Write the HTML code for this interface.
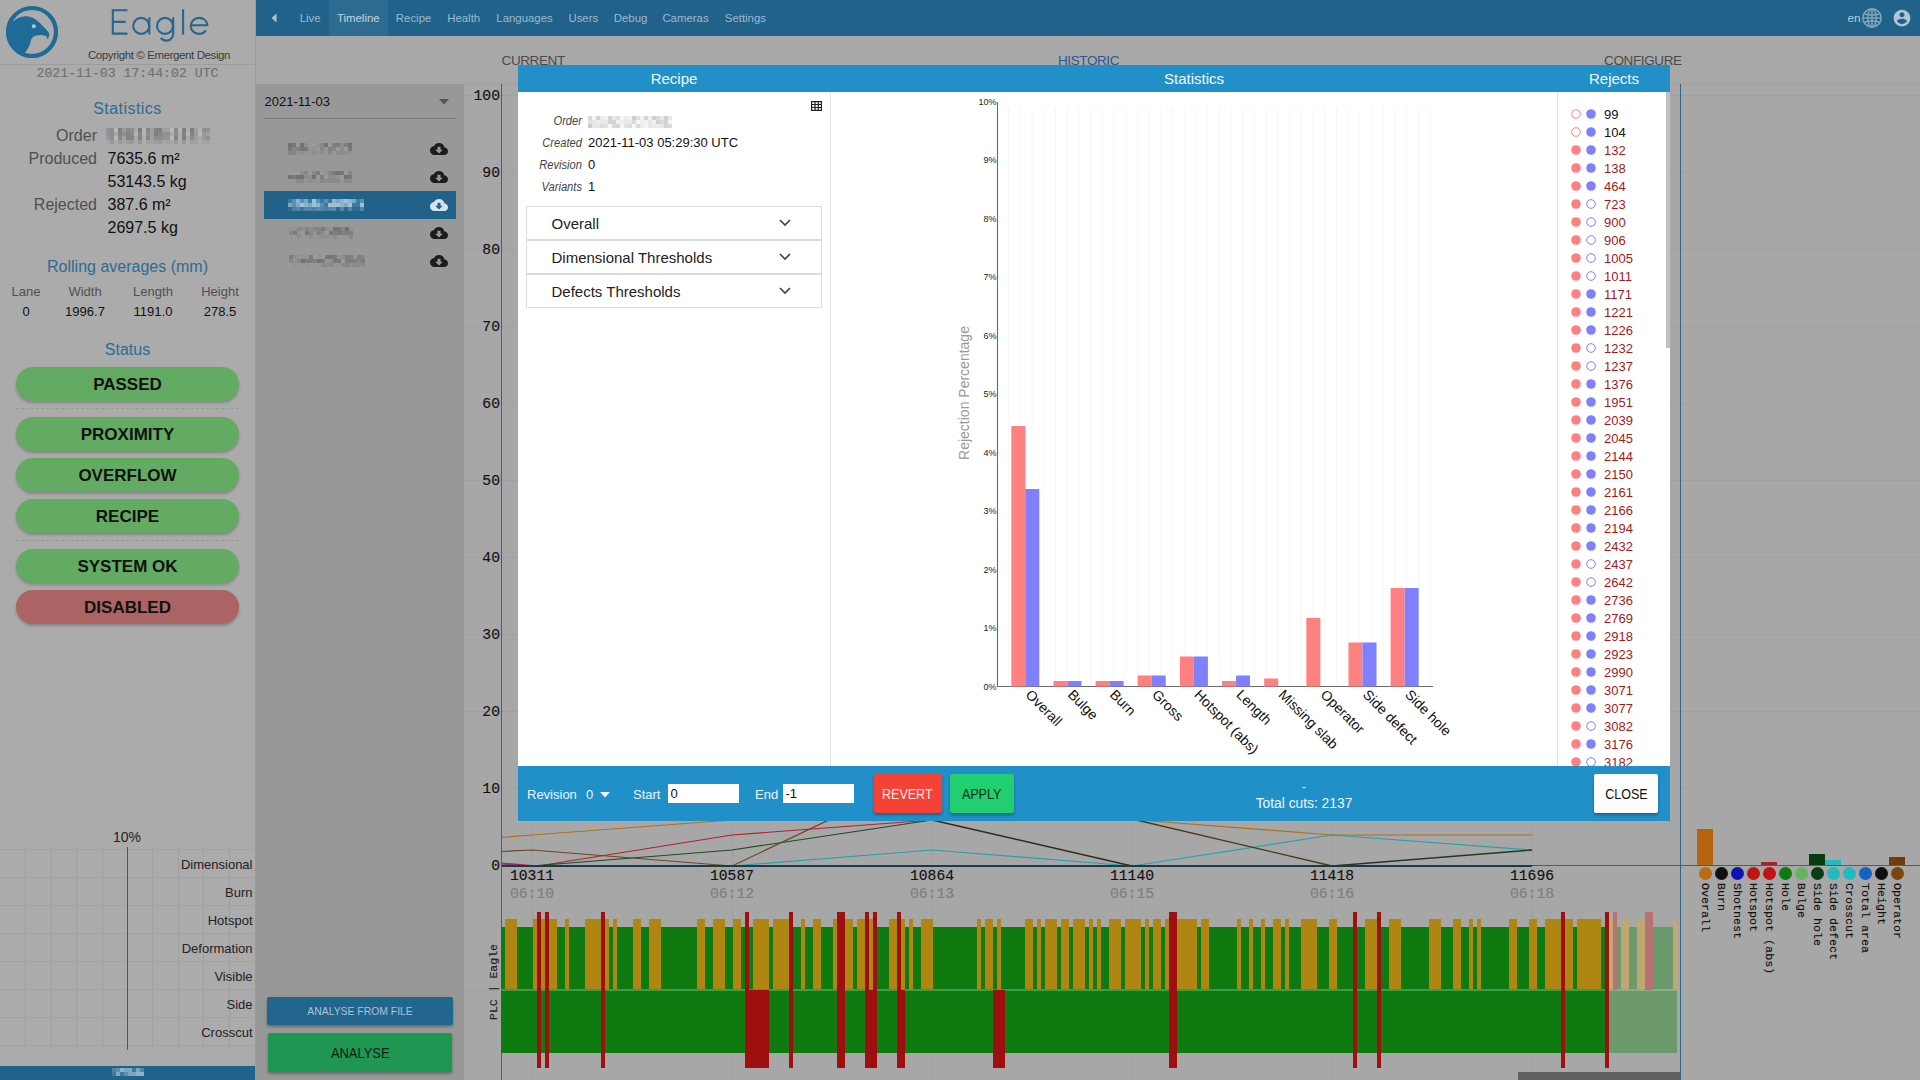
<!DOCTYPE html>
<html><head><meta charset="utf-8"><title>Eagle</title>
<style>
*{box-sizing:border-box;margin:0;padding:0}
html,body{width:1920px;height:1080px;overflow:hidden;background:#a7a7a7;font-family:"Liberation Sans",sans-serif;}
.a{position:absolute;white-space:nowrap}
.m{font-family:"Liberation Mono",monospace;-webkit-text-stroke:.15px}
.c{text-align:center}
.r{text-align:right}
#sidebar{left:0;top:0;width:255px;height:1080px;background:#ababab}
#nav{left:256px;top:0;width:1664px;height:36px;background:#21628a}
#panel{left:256px;top:84px;width:208px;height:996px;background:#989898}
.nv{top:0;height:36px;line-height:36px;font-size:11.4px;color:#9db9cc}
.pill{left:16px;width:223px;height:34px;border-radius:17px;line-height:36px;text-align:center;font-weight:bold;font-size:17px;color:#111;box-shadow:0 2px 3px rgba(0,0,0,.22)}
.g{background:#63ab63}.rd{background:#ab6363}
.st{font-size:16px;line-height:20px}
.lbl{color:#505050}
.h{color:#2d6b92;font-size:16px;line-height:20px;left:0;width:255px;text-align:center}
.t13{font-size:13px;line-height:16px}
.sq{display:inline-block;transform:scaleX(.835)}
</style></head><body>

<div class="a" style="left:256px;top:36px;width:1664px;height:48px;background:#a8a8a8"></div>
<div class="a" style="left:464px;top:83px;width:1456px;height:1px;background:#a0a0a0"></div>
<div class="a" style="left:464px;top:95px;width:1456px;height:1px;background:#a0a0a0"></div>
<div class="a" style="left:464px;top:172px;width:1456px;height:1px;background:#a0a0a0"></div>
<div class="a" style="left:464px;top:249px;width:1456px;height:1px;background:#a0a0a0"></div>
<div class="a" style="left:464px;top:326px;width:1456px;height:1px;background:#a0a0a0"></div>
<div class="a" style="left:464px;top:403px;width:1456px;height:1px;background:#a0a0a0"></div>
<div class="a" style="left:464px;top:480px;width:1456px;height:1px;background:#a0a0a0"></div>
<div class="a" style="left:464px;top:557px;width:1456px;height:1px;background:#a0a0a0"></div>
<div class="a" style="left:464px;top:634px;width:1456px;height:1px;background:#a0a0a0"></div>
<div class="a" style="left:464px;top:711px;width:1456px;height:1px;background:#a0a0a0"></div>
<div class="a" style="left:464px;top:788px;width:1456px;height:1px;background:#a0a0a0"></div>
<div class="a" style="left:532px;top:84px;width:1px;height:996px;background:#9f9f9f"></div>
<div class="a" style="left:732px;top:84px;width:1px;height:996px;background:#9f9f9f"></div>
<div class="a" style="left:932px;top:84px;width:1px;height:996px;background:#9f9f9f"></div>
<div class="a" style="left:1132px;top:84px;width:1px;height:996px;background:#9f9f9f"></div>
<div class="a" style="left:1332px;top:84px;width:1px;height:996px;background:#9f9f9f"></div>
<div class="a" style="left:1532px;top:84px;width:1px;height:996px;background:#9f9f9f"></div>
<div class="a m r" style="left:440px;width:60px;top:86px;height:20px;line-height:20px;font-size:14.7px;color:#111">100</div>
<div class="a m r" style="left:440px;width:60px;top:163px;height:20px;line-height:20px;font-size:14.7px;color:#111">90</div>
<div class="a m r" style="left:440px;width:60px;top:240px;height:20px;line-height:20px;font-size:14.7px;color:#111">80</div>
<div class="a m r" style="left:440px;width:60px;top:317px;height:20px;line-height:20px;font-size:14.7px;color:#111">70</div>
<div class="a m r" style="left:440px;width:60px;top:394px;height:20px;line-height:20px;font-size:14.7px;color:#111">60</div>
<div class="a m r" style="left:440px;width:60px;top:471px;height:20px;line-height:20px;font-size:14.7px;color:#111">50</div>
<div class="a m r" style="left:440px;width:60px;top:548px;height:20px;line-height:20px;font-size:14.7px;color:#111">40</div>
<div class="a m r" style="left:440px;width:60px;top:625px;height:20px;line-height:20px;font-size:14.7px;color:#111">30</div>
<div class="a m r" style="left:440px;width:60px;top:702px;height:20px;line-height:20px;font-size:14.7px;color:#111">20</div>
<div class="a m r" style="left:440px;width:60px;top:779px;height:20px;line-height:20px;font-size:14.7px;color:#111">10</div>
<div class="a m r" style="left:440px;width:60px;top:856px;height:20px;line-height:20px;font-size:14.7px;color:#111">0</div>
<div class="a c" style="left:483.2px;width:100px;top:50.5px;height:20px;line-height:20px;font-size:13.5px;letter-spacing:-.38px;color:#4a4a4a">CURRENT</div>
<div class="a c" style="left:1038.5px;width:100px;top:50.5px;height:20px;line-height:20px;font-size:13.5px;letter-spacing:-.38px;color:#2f5590">HISTORIC</div>
<div class="a c" style="left:1592.9px;width:100px;top:50.5px;height:20px;line-height:20px;font-size:13.5px;letter-spacing:-.38px;color:#4a4a4a">CONFIGURE</div>
<svg class="a" style="left:0;top:0" width="1920" height="1080" viewBox="0 0 1920 1080">
<polyline fill="none" stroke="#b07020" stroke-width="1.2" points="501,837.5 532,835 732,820 932,790 1132,819.5 1332,835 1532,835"/>
<polyline fill="none" stroke="#b02030" stroke-width="1.2" points="501,863 538,866 732,835 932,820 1132,760"/>
<polyline fill="none" stroke="#803070" stroke-width="1.2" points="501,864 532,866"/>
<polyline fill="none" stroke="#1f4a22" stroke-width="1.2" points="532,866 732,850 932,820"/>
<polyline fill="none" stroke="#6b4a20" stroke-width="1.2" points="501,851.5 532,850 732,866 932,771"/>
<polyline fill="none" stroke="#2aa0a8" stroke-width="1.2" points="732,866 932,850 1132,866 1332,835 1532,850"/>
<polyline fill="none" stroke="#332a1c" stroke-width="1.5" points="932,820 1132,866"/>
<polyline fill="none" stroke="#4a3a1c" stroke-width="1.3" points="1132,819 1332,866"/>
<polyline fill="none" stroke="#1f3a22" stroke-width="1.4" points="1332,866 1532,850"/>
</svg>
<div class="a" style="left:501px;top:865px;width:1031px;height:2px;background:#1d3a4a"></div>
<div class="a" style="left:1532px;top:865px;width:388px;height:1px;background:#2f6589"></div>
<div class="a" style="left:501px;top:84px;width:1px;height:996px;background:#2f6589"></div>
<div class="a" style="left:1680px;top:84px;width:1px;height:996px;background:#2f6589"></div>
<div class="a m c" style="left:492px;width:80px;top:866px;height:20px;line-height:20px;font-size:14.7px;color:#111">10311</div>
<div class="a m c" style="left:492px;width:80px;top:884px;height:20px;line-height:20px;font-size:14.7px;color:#7d7d7d">06:10</div>
<div class="a m c" style="left:692px;width:80px;top:866px;height:20px;line-height:20px;font-size:14.7px;color:#111">10587</div>
<div class="a m c" style="left:692px;width:80px;top:884px;height:20px;line-height:20px;font-size:14.7px;color:#7d7d7d">06:12</div>
<div class="a m c" style="left:892px;width:80px;top:866px;height:20px;line-height:20px;font-size:14.7px;color:#111">10864</div>
<div class="a m c" style="left:892px;width:80px;top:884px;height:20px;line-height:20px;font-size:14.7px;color:#7d7d7d">06:13</div>
<div class="a m c" style="left:1092px;width:80px;top:866px;height:20px;line-height:20px;font-size:14.7px;color:#111">11140</div>
<div class="a m c" style="left:1092px;width:80px;top:884px;height:20px;line-height:20px;font-size:14.7px;color:#7d7d7d">06:15</div>
<div class="a m c" style="left:1292px;width:80px;top:866px;height:20px;line-height:20px;font-size:14.7px;color:#111">11418</div>
<div class="a m c" style="left:1292px;width:80px;top:884px;height:20px;line-height:20px;font-size:14.7px;color:#7d7d7d">06:16</div>
<div class="a m c" style="left:1492px;width:80px;top:866px;height:20px;line-height:20px;font-size:14.7px;color:#111">11696</div>
<div class="a m c" style="left:1492px;width:80px;top:884px;height:20px;line-height:20px;font-size:14.7px;color:#7d7d7d">06:18</div>
<div class="a" style="left:501px;top:927px;width:1108px;height:125.5px;background:#0f7a0f"></div>
<div class="a" style="left:1613px;top:927px;width:64px;height:63px;background:#6d9a6d"></div>
<div class="a" style="left:1609px;top:990px;width:68px;height:62.5px;background:#6d9a6d"></div>
<div class="a" style="left:505px;top:919px;width:12px;height:71px;background:#b08612"></div>
<div class="a" style="left:533px;top:919px;width:24px;height:71px;background:#b08612"></div>
<div class="a" style="left:565px;top:919px;width:4px;height:71px;background:#b08612"></div>
<div class="a" style="left:585px;top:919px;width:24px;height:71px;background:#b08612"></div>
<div class="a" style="left:613px;top:919px;width:4px;height:71px;background:#b08612"></div>
<div class="a" style="left:633px;top:919px;width:8px;height:71px;background:#b08612"></div>
<div class="a" style="left:649px;top:919px;width:12px;height:71px;background:#b08612"></div>
<div class="a" style="left:697px;top:919px;width:8px;height:71px;background:#b08612"></div>
<div class="a" style="left:713px;top:919px;width:12px;height:71px;background:#b08612"></div>
<div class="a" style="left:733px;top:919px;width:8px;height:71px;background:#b08612"></div>
<div class="a" style="left:753px;top:919px;width:16px;height:71px;background:#b08612"></div>
<div class="a" style="left:773px;top:919px;width:16px;height:71px;background:#b08612"></div>
<div class="a" style="left:801px;top:919px;width:4px;height:71px;background:#b08612"></div>
<div class="a" style="left:813px;top:919px;width:8px;height:71px;background:#b08612"></div>
<div class="a" style="left:833px;top:919px;width:20px;height:71px;background:#b08612"></div>
<div class="a" style="left:857px;top:919px;width:16px;height:71px;background:#b08612"></div>
<div class="a" style="left:889px;top:919px;width:16px;height:71px;background:#b08612"></div>
<div class="a" style="left:909px;top:919px;width:4px;height:71px;background:#b08612"></div>
<div class="a" style="left:921px;top:919px;width:12px;height:71px;background:#b08612"></div>
<div class="a" style="left:977px;top:919px;width:4px;height:71px;background:#b08612"></div>
<div class="a" style="left:985px;top:919px;width:8px;height:71px;background:#b08612"></div>
<div class="a" style="left:997px;top:919px;width:4px;height:71px;background:#b08612"></div>
<div class="a" style="left:1025px;top:919px;width:8px;height:71px;background:#b08612"></div>
<div class="a" style="left:1037px;top:919px;width:4px;height:71px;background:#b08612"></div>
<div class="a" style="left:1045px;top:919px;width:12px;height:71px;background:#b08612"></div>
<div class="a" style="left:1061px;top:919px;width:8px;height:71px;background:#b08612"></div>
<div class="a" style="left:1073px;top:919px;width:12px;height:71px;background:#b08612"></div>
<div class="a" style="left:1089px;top:919px;width:4px;height:71px;background:#b08612"></div>
<div class="a" style="left:1097px;top:919px;width:4px;height:71px;background:#b08612"></div>
<div class="a" style="left:1109px;top:919px;width:12px;height:71px;background:#b08612"></div>
<div class="a" style="left:1125px;top:919px;width:16px;height:71px;background:#b08612"></div>
<div class="a" style="left:1145px;top:919px;width:4px;height:71px;background:#b08612"></div>
<div class="a" style="left:1153px;top:919px;width:8px;height:71px;background:#b08612"></div>
<div class="a" style="left:1165px;top:919px;width:32px;height:71px;background:#b08612"></div>
<div class="a" style="left:1201px;top:919px;width:8px;height:71px;background:#b08612"></div>
<div class="a" style="left:1237px;top:919px;width:4px;height:71px;background:#b08612"></div>
<div class="a" style="left:1249px;top:919px;width:4px;height:71px;background:#b08612"></div>
<div class="a" style="left:1261px;top:919px;width:4px;height:71px;background:#b08612"></div>
<div class="a" style="left:1273px;top:919px;width:8px;height:71px;background:#b08612"></div>
<div class="a" style="left:1285px;top:919px;width:4px;height:71px;background:#b08612"></div>
<div class="a" style="left:1301px;top:919px;width:16px;height:71px;background:#b08612"></div>
<div class="a" style="left:1329px;top:919px;width:8px;height:71px;background:#b08612"></div>
<div class="a" style="left:1365px;top:919px;width:12px;height:71px;background:#b08612"></div>
<div class="a" style="left:1389px;top:919px;width:12px;height:71px;background:#b08612"></div>
<div class="a" style="left:1429px;top:919px;width:12px;height:71px;background:#b08612"></div>
<div class="a" style="left:1453px;top:919px;width:8px;height:71px;background:#b08612"></div>
<div class="a" style="left:1469px;top:919px;width:4px;height:71px;background:#b08612"></div>
<div class="a" style="left:1477px;top:919px;width:4px;height:71px;background:#b08612"></div>
<div class="a" style="left:1509px;top:919px;width:8px;height:71px;background:#b08612"></div>
<div class="a" style="left:1529px;top:919px;width:8px;height:71px;background:#b08612"></div>
<div class="a" style="left:1545px;top:919px;width:28px;height:71px;background:#b08612"></div>
<div class="a" style="left:1577px;top:919px;width:24px;height:71px;background:#b08612"></div>
<div class="a" style="left:1609px;top:919px;width:4px;height:71px;background:#bfa872"></div>
<div class="a" style="left:1621px;top:919px;width:8px;height:71px;background:#bfa872"></div>
<div class="a" style="left:1637px;top:919px;width:8px;height:71px;background:#bfa872"></div>
<div class="a" style="left:1673px;top:919px;width:4px;height:71px;background:#bfa872"></div>
<div class="a" style="left:501px;top:989px;width:1108px;height:2px;background:#3f9a4a"></div>
<div class="a" style="left:1609px;top:989px;width:68px;height:2px;background:#8ab08a"></div>
<div class="a" style="left:537px;top:911.5px;width:4px;height:156.8px;background:#9e1010"></div>
<div class="a" style="left:545px;top:911.5px;width:4px;height:156.8px;background:#9e1010"></div>
<div class="a" style="left:601px;top:911.5px;width:4px;height:156.8px;background:#9e1010"></div>
<div class="a" style="left:789px;top:911.5px;width:4px;height:156.8px;background:#9e1010"></div>
<div class="a" style="left:837px;top:911.5px;width:8px;height:156.8px;background:#9e1010"></div>
<div class="a" style="left:1169px;top:911.5px;width:8px;height:156.8px;background:#9e1010"></div>
<div class="a" style="left:1353px;top:911.5px;width:4px;height:156.8px;background:#9e1010"></div>
<div class="a" style="left:1377px;top:911.5px;width:4px;height:156.8px;background:#9e1010"></div>
<div class="a" style="left:1561px;top:911.5px;width:4px;height:156.8px;background:#9e1010"></div>
<div class="a" style="left:1605px;top:911.5px;width:4px;height:156.8px;background:#9e1010"></div>
<div class="a" style="left:745px;top:911.5px;width:4px;height:78.5px;background:#9e1010"></div>
<div class="a" style="left:865px;top:911.5px;width:4px;height:78.5px;background:#9e1010"></div>
<div class="a" style="left:873px;top:911.5px;width:4px;height:78.5px;background:#9e1010"></div>
<div class="a" style="left:897px;top:911.5px;width:4px;height:78.5px;background:#9e1010"></div>
<div class="a" style="left:745px;top:990px;width:24px;height:78.3px;background:#9e1010"></div>
<div class="a" style="left:865px;top:990px;width:12px;height:78.3px;background:#9e1010"></div>
<div class="a" style="left:897px;top:990px;width:8px;height:78.3px;background:#9e1010"></div>
<div class="a" style="left:993px;top:990px;width:12px;height:78.3px;background:#9e1010"></div>
<div class="a" style="left:1613px;top:911.5px;width:4px;height:78.5px;background:#b87272"></div>
<div class="a" style="left:1645px;top:911.5px;width:8px;height:78.5px;background:#b87272"></div>
<div class="a" style="left:464px;top:990px;width:37px;height:1px;background:#a0a0a0"></div>
<div class="a m" style="left:494px;top:982px;width:0;height:0"><div class="a m" style="transform:translate(-50%,-50%) rotate(-90deg);font-size:11.5px;color:#222;line-height:12px">PLC | Eagle</div></div>
<div class="a" style="left:1518px;top:1072px;width:162px;height:8px;background:#616161"></div>
<div class="a" style="left:1697px;top:829px;width:16px;height:36px;background:#b5650f"></div>
<div class="a" style="left:1698.5px;top:867px;width:13px;height:13px;border-radius:50%;background:#b96c10"></div>
<div class="a m" style="left:1705px;top:883px;width:0;height:0"><div class="a m" style="transform-origin:0 0;transform:rotate(90deg) translate(0,-50%);font-size:11.7px;line-height:12px;color:#111">Overall</div></div>
<div class="a" style="left:1714.5px;top:867px;width:13px;height:13px;border-radius:50%;background:#111"></div>
<div class="a m" style="left:1721px;top:883px;width:0;height:0"><div class="a m" style="transform-origin:0 0;transform:rotate(90deg) translate(0,-50%);font-size:11.7px;line-height:12px;color:#111">Burn</div></div>
<div class="a" style="left:1730.5px;top:867px;width:13px;height:13px;border-radius:50%;background:#1212b4"></div>
<div class="a m" style="left:1737px;top:883px;width:0;height:0"><div class="a m" style="transform-origin:0 0;transform:rotate(90deg) translate(0,-50%);font-size:11.7px;line-height:12px;color:#111">Shotnest</div></div>
<div class="a" style="left:1746.5px;top:867px;width:13px;height:13px;border-radius:50%;background:#c11414"></div>
<div class="a m" style="left:1753px;top:883px;width:0;height:0"><div class="a m" style="transform-origin:0 0;transform:rotate(90deg) translate(0,-50%);font-size:11.7px;line-height:12px;color:#111">Hotspot</div></div>
<div class="a" style="left:1761px;top:862px;width:16px;height:3px;background:#a82028"></div>
<div class="a" style="left:1762.5px;top:867px;width:13px;height:13px;border-radius:50%;background:#c11414"></div>
<div class="a m" style="left:1769px;top:883px;width:0;height:0"><div class="a m" style="transform-origin:0 0;transform:rotate(90deg) translate(0,-50%);font-size:11.7px;line-height:12px;color:#111">Hotspot (abs)</div></div>
<div class="a" style="left:1778.5px;top:867px;width:13px;height:13px;border-radius:50%;background:#0f7a0f"></div>
<div class="a m" style="left:1785px;top:883px;width:0;height:0"><div class="a m" style="transform-origin:0 0;transform:rotate(90deg) translate(0,-50%);font-size:11.7px;line-height:12px;color:#111">Hole</div></div>
<div class="a" style="left:1794.5px;top:867px;width:13px;height:13px;border-radius:50%;background:#63b463"></div>
<div class="a m" style="left:1801px;top:883px;width:0;height:0"><div class="a m" style="transform-origin:0 0;transform:rotate(90deg) translate(0,-50%);font-size:11.7px;line-height:12px;color:#111">Bulge</div></div>
<div class="a" style="left:1809px;top:854px;width:16px;height:11px;background:#0a3a10"></div>
<div class="a" style="left:1810.5px;top:867px;width:13px;height:13px;border-radius:50%;background:#0c3c12"></div>
<div class="a m" style="left:1817px;top:883px;width:0;height:0"><div class="a m" style="transform-origin:0 0;transform:rotate(90deg) translate(0,-50%);font-size:11.7px;line-height:12px;color:#111">Side hole</div></div>
<div class="a" style="left:1825px;top:860px;width:16px;height:5px;background:#22b9c1"></div>
<div class="a" style="left:1826.5px;top:867px;width:13px;height:13px;border-radius:50%;background:#22b9c1"></div>
<div class="a m" style="left:1833px;top:883px;width:0;height:0"><div class="a m" style="transform-origin:0 0;transform:rotate(90deg) translate(0,-50%);font-size:11.7px;line-height:12px;color:#111">Side defect</div></div>
<div class="a" style="left:1842.5px;top:867px;width:13px;height:13px;border-radius:50%;background:#22b9c1"></div>
<div class="a m" style="left:1849px;top:883px;width:0;height:0"><div class="a m" style="transform-origin:0 0;transform:rotate(90deg) translate(0,-50%);font-size:11.7px;line-height:12px;color:#111">Crosscut</div></div>
<div class="a" style="left:1858.5px;top:867px;width:13px;height:13px;border-radius:50%;background:#1264c4"></div>
<div class="a m" style="left:1865px;top:883px;width:0;height:0"><div class="a m" style="transform-origin:0 0;transform:rotate(90deg) translate(0,-50%);font-size:11.7px;line-height:12px;color:#111">Total area</div></div>
<div class="a" style="left:1874.5px;top:867px;width:13px;height:13px;border-radius:50%;background:#111"></div>
<div class="a m" style="left:1881px;top:883px;width:0;height:0"><div class="a m" style="transform-origin:0 0;transform:rotate(90deg) translate(0,-50%);font-size:11.7px;line-height:12px;color:#111">Height</div></div>
<div class="a" style="left:1889px;top:857px;width:16px;height:8px;background:#6b3d10"></div>
<div class="a" style="left:1890.5px;top:867px;width:13px;height:13px;border-radius:50%;background:#7a4512"></div>
<div class="a m" style="left:1897px;top:883px;width:0;height:0"><div class="a m" style="transform-origin:0 0;transform:rotate(90deg) translate(0,-50%);font-size:11.7px;line-height:12px;color:#111">Operator</div></div>
<div id="nav" class="a">
<div class="a" style="left:73px;top:0;width:59px;height:36px;background:#2d6b91"></div>
<svg class="a" style="left:14px;top:13px" width="8" height="10" viewBox="0 0 8 10"><path d="M6.5 0.5 L1.5 5 L6.5 9.5Z" fill="#a9c3d4"/></svg>
<div class="a nv c" style="left:4.1px;width:100px;color:#9db9cc">Live</div>
<div class="a nv c" style="left:52.3px;width:100px;color:#c3d6e2">Timeline</div>
<div class="a nv c" style="left:107.6px;width:100px;color:#9db9cc">Recipe</div>
<div class="a nv c" style="left:157.7px;width:100px;color:#9db9cc">Health</div>
<div class="a nv c" style="left:218.5px;width:100px;color:#9db9cc">Languages</div>
<div class="a nv c" style="left:277.3px;width:100px;color:#9db9cc">Users</div>
<div class="a nv c" style="left:324.6px;width:100px;color:#9db9cc">Debug</div>
<div class="a nv c" style="left:379.5px;width:100px;color:#9db9cc">Cameras</div>
<div class="a nv c" style="left:439.4px;width:100px;color:#9db9cc">Settings</div>
<div class="a nv" style="left:1591.5px;color:#b7cddb;font-size:11.8px">en</div>
<svg class="a" style="left:1606px;top:8px" width="20" height="20" viewBox="0 0 20 20" fill="none" stroke="#7fa3bb" stroke-width="1.6"><circle cx="10" cy="10" r="9.1"/><ellipse cx="10" cy="10" rx="4.2" ry="9.1"/><path d="M10 0.9V19.1M1 10H19M2.3 5.6C6 7.6 14 7.6 17.7 5.6M2.3 14.4C6 12.4 14 12.4 17.7 14.4"/></svg>
<svg class="a" style="left:1636.3px;top:8px" width="20" height="20" viewBox="0 0 24 24"><path fill="#b0c5d5" d="M12 2C6.48 2 2 6.48 2 12s4.48 10 10 10 10-4.48 10-10S17.52 2 12 2zm0 3c1.66 0 3 1.34 3 3s-1.34 3-3 3-3-1.34-3-3 1.34-3 3-3zm0 14.2c-2.5 0-4.71-1.28-6-3.22.03-1.99 4-3.08 6-3.08 1.99 0 5.97 1.09 6 3.08-1.29 1.94-3.5 3.22-6 3.22z"/></svg>
</div>
<div id="panel" class="a">
<div class="a t13" style="left:8.5px;top:9.5px;color:#111">2021-11-03</div>
<svg class="a" style="left:183px;top:14.5px" width="10" height="6" viewBox="0 0 10 6"><path d="M0 0H10L5 5.5Z" fill="#555"/></svg>
<div class="a" style="left:8px;top:34px;width:192px;height:1px;background:#7c7c7c"></div>
<div class="a" style="left:8px;top:107px;width:192px;height:28px;background:#21628a"></div>
<svg class="a" style="left:32px;top:59px" width="64" height="12" shape-rendering="crispEdges"><rect x="0" y="0" width="4" height="4" fill="#727272" opacity="1"/><rect x="4" y="0" width="4" height="4" fill="#787878" opacity="1"/><rect x="8" y="0" width="4" height="4" fill="#9a9a9a" opacity="1"/><rect x="12" y="0" width="4" height="4" fill="#727272" opacity="1"/><rect x="16" y="0" width="4" height="4" fill="#8e8e8e" opacity="1"/><rect x="20" y="0" width="4" height="4" fill="#9a9a9a" opacity="1"/><rect x="24" y="0" width="4" height="4" fill="#9a9a9a" opacity="1"/><rect x="28" y="0" width="4" height="4" fill="#949494" opacity="1"/><rect x="32" y="0" width="4" height="4" fill="#868686" opacity="1"/><rect x="36" y="0" width="4" height="4" fill="#727272" opacity="1"/><rect x="40" y="0" width="4" height="4" fill="#9a9a9a" opacity="1"/><rect x="44" y="0" width="4" height="4" fill="#808080" opacity="1"/><rect x="48" y="0" width="4" height="4" fill="#7c7c7c" opacity="1"/><rect x="52" y="0" width="4" height="4" fill="#8e8e8e" opacity="1"/><rect x="56" y="0" width="4" height="4" fill="#808080" opacity="1"/><rect x="60" y="0" width="4" height="4" fill="#727272" opacity="1"/><rect x="0" y="4" width="4" height="4" fill="#787878" opacity="1"/><rect x="4" y="4" width="4" height="4" fill="#868686" opacity="1"/><rect x="8" y="4" width="4" height="4" fill="#808080" opacity="1"/><rect x="12" y="4" width="4" height="4" fill="#787878" opacity="1"/><rect x="16" y="4" width="4" height="4" fill="#787878" opacity="1"/><rect x="20" y="4" width="4" height="4" fill="#949494" opacity="1"/><rect x="24" y="4" width="4" height="4" fill="#949494" opacity="1"/><rect x="28" y="4" width="4" height="4" fill="#9a9a9a" opacity="1"/><rect x="32" y="4" width="4" height="4" fill="#868686" opacity="1"/><rect x="36" y="4" width="4" height="4" fill="#949494" opacity="1"/><rect x="40" y="4" width="4" height="4" fill="#808080" opacity="1"/><rect x="44" y="4" width="4" height="4" fill="#868686" opacity="1"/><rect x="48" y="4" width="4" height="4" fill="#9a9a9a" opacity="1"/><rect x="52" y="4" width="4" height="4" fill="#8e8e8e" opacity="1"/><rect x="56" y="4" width="4" height="4" fill="#9a9a9a" opacity="1"/><rect x="60" y="4" width="4" height="4" fill="#787878" opacity="1"/><rect x="0" y="8" width="4" height="4" fill="#727272" opacity="0.45"/><rect x="4" y="8" width="4" height="4" fill="#727272" opacity="0.45"/><rect x="8" y="8" width="4" height="4" fill="#8e8e8e" opacity="0.45"/><rect x="12" y="8" width="4" height="4" fill="#868686" opacity="0.45"/><rect x="16" y="8" width="4" height="4" fill="#8e8e8e" opacity="0.45"/><rect x="20" y="8" width="4" height="4" fill="#949494" opacity="0.45"/><rect x="24" y="8" width="4" height="4" fill="#808080" opacity="0.45"/><rect x="28" y="8" width="4" height="4" fill="#8e8e8e" opacity="0.45"/><rect x="32" y="8" width="4" height="4" fill="#808080" opacity="0.45"/><rect x="36" y="8" width="4" height="4" fill="#9a9a9a" opacity="0.45"/><rect x="40" y="8" width="4" height="4" fill="#787878" opacity="0.45"/><rect x="44" y="8" width="4" height="4" fill="#9a9a9a" opacity="0.45"/><rect x="48" y="8" width="4" height="4" fill="#7c7c7c" opacity="0.45"/><rect x="52" y="8" width="4" height="4" fill="#808080" opacity="0.45"/><rect x="56" y="8" width="4" height="4" fill="#868686" opacity="0.45"/><rect x="60" y="8" width="4" height="4" fill="#8e8e8e" opacity="0.45"/></svg>
<svg class="a" style="left:174px;top:59px" width="18" height="12" viewBox="0 0 24 16"><path fill="#1c1c1c" d="M19.35 6.04C18.67 2.59 15.64 0 12 0 9.11 0 6.6 1.64 5.35 4.04 2.34 4.36 0 6.91 0 10c0 3.31 2.69 6 6 6h13c2.76 0 5-2.24 5-5 0-2.64-2.05-4.78-4.65-4.96zM17 9l-5 5-5-5h3V5h4v4h3z"/></svg>
<svg class="a" style="left:32px;top:87px" width="64" height="12" shape-rendering="crispEdges"><rect x="0" y="0" width="4" height="4" fill="#9a9a9a" opacity="1"/><rect x="4" y="0" width="4" height="4" fill="#9a9a9a" opacity="1"/><rect x="8" y="0" width="4" height="4" fill="#9a9a9a" opacity="1"/><rect x="12" y="0" width="4" height="4" fill="#8e8e8e" opacity="1"/><rect x="16" y="0" width="4" height="4" fill="#868686" opacity="1"/><rect x="20" y="0" width="4" height="4" fill="#9a9a9a" opacity="1"/><rect x="24" y="0" width="4" height="4" fill="#868686" opacity="1"/><rect x="28" y="0" width="4" height="4" fill="#7c7c7c" opacity="1"/><rect x="32" y="0" width="4" height="4" fill="#9a9a9a" opacity="1"/><rect x="36" y="0" width="4" height="4" fill="#949494" opacity="1"/><rect x="40" y="0" width="4" height="4" fill="#868686" opacity="1"/><rect x="44" y="0" width="4" height="4" fill="#7c7c7c" opacity="1"/><rect x="48" y="0" width="4" height="4" fill="#727272" opacity="1"/><rect x="52" y="0" width="4" height="4" fill="#787878" opacity="1"/><rect x="56" y="0" width="4" height="4" fill="#9a9a9a" opacity="1"/><rect x="60" y="0" width="4" height="4" fill="#868686" opacity="1"/><rect x="0" y="4" width="4" height="4" fill="#727272" opacity="1"/><rect x="4" y="4" width="4" height="4" fill="#7c7c7c" opacity="1"/><rect x="8" y="4" width="4" height="4" fill="#727272" opacity="1"/><rect x="12" y="4" width="4" height="4" fill="#727272" opacity="1"/><rect x="16" y="4" width="4" height="4" fill="#8e8e8e" opacity="1"/><rect x="20" y="4" width="4" height="4" fill="#8e8e8e" opacity="1"/><rect x="24" y="4" width="4" height="4" fill="#727272" opacity="1"/><rect x="28" y="4" width="4" height="4" fill="#9a9a9a" opacity="1"/><rect x="32" y="4" width="4" height="4" fill="#808080" opacity="1"/><rect x="36" y="4" width="4" height="4" fill="#9a9a9a" opacity="1"/><rect x="40" y="4" width="4" height="4" fill="#8e8e8e" opacity="1"/><rect x="44" y="4" width="4" height="4" fill="#8e8e8e" opacity="1"/><rect x="48" y="4" width="4" height="4" fill="#949494" opacity="1"/><rect x="52" y="4" width="4" height="4" fill="#9a9a9a" opacity="1"/><rect x="56" y="4" width="4" height="4" fill="#727272" opacity="1"/><rect x="60" y="4" width="4" height="4" fill="#7c7c7c" opacity="1"/><rect x="0" y="8" width="4" height="4" fill="#9a9a9a" opacity="0.45"/><rect x="4" y="8" width="4" height="4" fill="#949494" opacity="0.45"/><rect x="8" y="8" width="4" height="4" fill="#787878" opacity="0.45"/><rect x="12" y="8" width="4" height="4" fill="#7c7c7c" opacity="0.45"/><rect x="16" y="8" width="4" height="4" fill="#949494" opacity="0.45"/><rect x="20" y="8" width="4" height="4" fill="#808080" opacity="0.45"/><rect x="24" y="8" width="4" height="4" fill="#8e8e8e" opacity="0.45"/><rect x="28" y="8" width="4" height="4" fill="#949494" opacity="0.45"/><rect x="32" y="8" width="4" height="4" fill="#727272" opacity="0.45"/><rect x="36" y="8" width="4" height="4" fill="#7c7c7c" opacity="0.45"/><rect x="40" y="8" width="4" height="4" fill="#7c7c7c" opacity="0.45"/><rect x="44" y="8" width="4" height="4" fill="#787878" opacity="0.45"/><rect x="48" y="8" width="4" height="4" fill="#7c7c7c" opacity="0.45"/><rect x="52" y="8" width="4" height="4" fill="#949494" opacity="0.45"/><rect x="56" y="8" width="4" height="4" fill="#787878" opacity="0.45"/><rect x="60" y="8" width="4" height="4" fill="#7c7c7c" opacity="0.45"/></svg>
<svg class="a" style="left:174px;top:87px" width="18" height="12" viewBox="0 0 24 16"><path fill="#1c1c1c" d="M19.35 6.04C18.67 2.59 15.64 0 12 0 9.11 0 6.6 1.64 5.35 4.04 2.34 4.36 0 6.91 0 10c0 3.31 2.69 6 6 6h13c2.76 0 5-2.24 5-5 0-2.64-2.05-4.78-4.65-4.96zM17 9l-5 5-5-5h3V5h4v4h3z"/></svg>
<svg class="a" style="left:32px;top:115px" width="76" height="12" shape-rendering="crispEdges"><rect x="0" y="0" width="4" height="4" fill="#3f78a0" opacity="1"/><rect x="4" y="0" width="4" height="4" fill="#5f8fb0" opacity="1"/><rect x="8" y="0" width="4" height="4" fill="#8fb3cb" opacity="1"/><rect x="12" y="0" width="4" height="4" fill="#5f8fb0" opacity="1"/><rect x="16" y="0" width="4" height="4" fill="#7fa6c0" opacity="1"/><rect x="20" y="0" width="4" height="4" fill="#3f78a0" opacity="1"/><rect x="24" y="0" width="4" height="4" fill="#9fc0d6" opacity="1"/><rect x="28" y="0" width="4" height="4" fill="#5f8fb0" opacity="1"/><rect x="32" y="0" width="4" height="4" fill="#3f78a0" opacity="1"/><rect x="36" y="0" width="4" height="4" fill="#5f8fb0" opacity="1"/><rect x="40" y="0" width="4" height="4" fill="#3f78a0" opacity="1"/><rect x="44" y="0" width="4" height="4" fill="#8fb3cb" opacity="1"/><rect x="48" y="0" width="4" height="4" fill="#7fa6c0" opacity="1"/><rect x="52" y="0" width="4" height="4" fill="#8fb3cb" opacity="1"/><rect x="56" y="0" width="4" height="4" fill="#9fc0d6" opacity="1"/><rect x="60" y="0" width="4" height="4" fill="#8fb3cb" opacity="1"/><rect x="64" y="0" width="4" height="4" fill="#7fa6c0" opacity="1"/><rect x="68" y="0" width="4" height="4" fill="#3f78a0" opacity="1"/><rect x="72" y="0" width="4" height="4" fill="#5f8fb0" opacity="1"/><rect x="0" y="4" width="4" height="4" fill="#7fa6c0" opacity="1"/><rect x="4" y="4" width="4" height="4" fill="#5f8fb0" opacity="1"/><rect x="8" y="4" width="4" height="4" fill="#7fa6c0" opacity="1"/><rect x="12" y="4" width="4" height="4" fill="#9fc0d6" opacity="1"/><rect x="16" y="4" width="4" height="4" fill="#8fb3cb" opacity="1"/><rect x="20" y="4" width="4" height="4" fill="#7fa6c0" opacity="1"/><rect x="24" y="4" width="4" height="4" fill="#9fc0d6" opacity="1"/><rect x="28" y="4" width="4" height="4" fill="#8fb3cb" opacity="1"/><rect x="32" y="4" width="4" height="4" fill="#5f8fb0" opacity="1"/><rect x="36" y="4" width="4" height="4" fill="#3f78a0" opacity="1"/><rect x="40" y="4" width="4" height="4" fill="#9fc0d6" opacity="1"/><rect x="44" y="4" width="4" height="4" fill="#9fc0d6" opacity="1"/><rect x="48" y="4" width="4" height="4" fill="#9fc0d6" opacity="1"/><rect x="52" y="4" width="4" height="4" fill="#8fb3cb" opacity="1"/><rect x="56" y="4" width="4" height="4" fill="#7fa6c0" opacity="1"/><rect x="60" y="4" width="4" height="4" fill="#9fc0d6" opacity="1"/><rect x="64" y="4" width="4" height="4" fill="#3f78a0" opacity="1"/><rect x="68" y="4" width="4" height="4" fill="#3f78a0" opacity="1"/><rect x="72" y="4" width="4" height="4" fill="#9fc0d6" opacity="1"/><rect x="0" y="8" width="4" height="4" fill="#3f78a0" opacity="0.45"/><rect x="4" y="8" width="4" height="4" fill="#7fa6c0" opacity="0.45"/><rect x="8" y="8" width="4" height="4" fill="#8fb3cb" opacity="0.45"/><rect x="12" y="8" width="4" height="4" fill="#5f8fb0" opacity="0.45"/><rect x="16" y="8" width="4" height="4" fill="#8fb3cb" opacity="0.45"/><rect x="20" y="8" width="4" height="4" fill="#8fb3cb" opacity="0.45"/><rect x="24" y="8" width="4" height="4" fill="#7fa6c0" opacity="0.45"/><rect x="28" y="8" width="4" height="4" fill="#9fc0d6" opacity="0.45"/><rect x="32" y="8" width="4" height="4" fill="#8fb3cb" opacity="0.45"/><rect x="36" y="8" width="4" height="4" fill="#7fa6c0" opacity="0.45"/><rect x="40" y="8" width="4" height="4" fill="#8fb3cb" opacity="0.45"/><rect x="44" y="8" width="4" height="4" fill="#9fc0d6" opacity="0.45"/><rect x="48" y="8" width="4" height="4" fill="#3f78a0" opacity="0.45"/><rect x="52" y="8" width="4" height="4" fill="#8fb3cb" opacity="0.45"/><rect x="56" y="8" width="4" height="4" fill="#3f78a0" opacity="0.45"/><rect x="60" y="8" width="4" height="4" fill="#8fb3cb" opacity="0.45"/><rect x="64" y="8" width="4" height="4" fill="#3f78a0" opacity="0.45"/><rect x="68" y="8" width="4" height="4" fill="#3f78a0" opacity="0.45"/><rect x="72" y="8" width="4" height="4" fill="#8fb3cb" opacity="0.45"/></svg>
<svg class="a" style="left:174px;top:115px" width="18" height="12" viewBox="0 0 24 16"><path fill="#d8e4ec" d="M19.35 6.04C18.67 2.59 15.64 0 12 0 9.11 0 6.6 1.64 5.35 4.04 2.34 4.36 0 6.91 0 10c0 3.31 2.69 6 6 6h13c2.76 0 5-2.24 5-5 0-2.64-2.05-4.78-4.65-4.96zM17 9l-5 5-5-5h3V5h4v4h3z"/></svg>
<svg class="a" style="left:33px;top:143px" width="64" height="12" shape-rendering="crispEdges"><rect x="0" y="0" width="4" height="4" fill="#949494" opacity="1"/><rect x="4" y="0" width="4" height="4" fill="#949494" opacity="1"/><rect x="8" y="0" width="4" height="4" fill="#868686" opacity="1"/><rect x="12" y="0" width="4" height="4" fill="#8e8e8e" opacity="1"/><rect x="16" y="0" width="4" height="4" fill="#868686" opacity="1"/><rect x="20" y="0" width="4" height="4" fill="#8e8e8e" opacity="1"/><rect x="24" y="0" width="4" height="4" fill="#868686" opacity="1"/><rect x="28" y="0" width="4" height="4" fill="#868686" opacity="1"/><rect x="32" y="0" width="4" height="4" fill="#7c7c7c" opacity="1"/><rect x="36" y="0" width="4" height="4" fill="#8e8e8e" opacity="1"/><rect x="40" y="0" width="4" height="4" fill="#949494" opacity="1"/><rect x="44" y="0" width="4" height="4" fill="#727272" opacity="1"/><rect x="48" y="0" width="4" height="4" fill="#787878" opacity="1"/><rect x="52" y="0" width="4" height="4" fill="#868686" opacity="1"/><rect x="56" y="0" width="4" height="4" fill="#727272" opacity="1"/><rect x="60" y="0" width="4" height="4" fill="#949494" opacity="1"/><rect x="0" y="4" width="4" height="4" fill="#868686" opacity="1"/><rect x="4" y="4" width="4" height="4" fill="#7c7c7c" opacity="1"/><rect x="8" y="4" width="4" height="4" fill="#949494" opacity="1"/><rect x="12" y="4" width="4" height="4" fill="#9a9a9a" opacity="1"/><rect x="16" y="4" width="4" height="4" fill="#787878" opacity="1"/><rect x="20" y="4" width="4" height="4" fill="#868686" opacity="1"/><rect x="24" y="4" width="4" height="4" fill="#949494" opacity="1"/><rect x="28" y="4" width="4" height="4" fill="#808080" opacity="1"/><rect x="32" y="4" width="4" height="4" fill="#8e8e8e" opacity="1"/><rect x="36" y="4" width="4" height="4" fill="#9a9a9a" opacity="1"/><rect x="40" y="4" width="4" height="4" fill="#787878" opacity="1"/><rect x="44" y="4" width="4" height="4" fill="#808080" opacity="1"/><rect x="48" y="4" width="4" height="4" fill="#787878" opacity="1"/><rect x="52" y="4" width="4" height="4" fill="#808080" opacity="1"/><rect x="56" y="4" width="4" height="4" fill="#7c7c7c" opacity="1"/><rect x="60" y="4" width="4" height="4" fill="#808080" opacity="1"/><rect x="0" y="8" width="4" height="4" fill="#949494" opacity="0.45"/><rect x="4" y="8" width="4" height="4" fill="#9a9a9a" opacity="0.45"/><rect x="8" y="8" width="4" height="4" fill="#868686" opacity="0.45"/><rect x="12" y="8" width="4" height="4" fill="#9a9a9a" opacity="0.45"/><rect x="16" y="8" width="4" height="4" fill="#9a9a9a" opacity="0.45"/><rect x="20" y="8" width="4" height="4" fill="#868686" opacity="0.45"/><rect x="24" y="8" width="4" height="4" fill="#949494" opacity="0.45"/><rect x="28" y="8" width="4" height="4" fill="#8e8e8e" opacity="0.45"/><rect x="32" y="8" width="4" height="4" fill="#868686" opacity="0.45"/><rect x="36" y="8" width="4" height="4" fill="#808080" opacity="0.45"/><rect x="40" y="8" width="4" height="4" fill="#949494" opacity="0.45"/><rect x="44" y="8" width="4" height="4" fill="#808080" opacity="0.45"/><rect x="48" y="8" width="4" height="4" fill="#9a9a9a" opacity="0.45"/><rect x="52" y="8" width="4" height="4" fill="#949494" opacity="0.45"/><rect x="56" y="8" width="4" height="4" fill="#949494" opacity="0.45"/><rect x="60" y="8" width="4" height="4" fill="#787878" opacity="0.45"/></svg>
<svg class="a" style="left:174px;top:143px" width="18" height="12" viewBox="0 0 24 16"><path fill="#1c1c1c" d="M19.35 6.04C18.67 2.59 15.64 0 12 0 9.11 0 6.6 1.64 5.35 4.04 2.34 4.36 0 6.91 0 10c0 3.31 2.69 6 6 6h13c2.76 0 5-2.24 5-5 0-2.64-2.05-4.78-4.65-4.96zM17 9l-5 5-5-5h3V5h4v4h3z"/></svg>
<svg class="a" style="left:33px;top:171px" width="76" height="12" shape-rendering="crispEdges"><rect x="0" y="0" width="4" height="4" fill="#7c7c7c" opacity="1"/><rect x="4" y="0" width="4" height="4" fill="#8e8e8e" opacity="1"/><rect x="8" y="0" width="4" height="4" fill="#949494" opacity="1"/><rect x="12" y="0" width="4" height="4" fill="#949494" opacity="1"/><rect x="16" y="0" width="4" height="4" fill="#949494" opacity="1"/><rect x="20" y="0" width="4" height="4" fill="#7c7c7c" opacity="1"/><rect x="24" y="0" width="4" height="4" fill="#9a9a9a" opacity="1"/><rect x="28" y="0" width="4" height="4" fill="#949494" opacity="1"/><rect x="32" y="0" width="4" height="4" fill="#9a9a9a" opacity="1"/><rect x="36" y="0" width="4" height="4" fill="#787878" opacity="1"/><rect x="40" y="0" width="4" height="4" fill="#787878" opacity="1"/><rect x="44" y="0" width="4" height="4" fill="#7c7c7c" opacity="1"/><rect x="48" y="0" width="4" height="4" fill="#949494" opacity="1"/><rect x="52" y="0" width="4" height="4" fill="#8e8e8e" opacity="1"/><rect x="56" y="0" width="4" height="4" fill="#808080" opacity="1"/><rect x="60" y="0" width="4" height="4" fill="#808080" opacity="1"/><rect x="64" y="0" width="4" height="4" fill="#949494" opacity="1"/><rect x="68" y="0" width="4" height="4" fill="#808080" opacity="1"/><rect x="72" y="0" width="4" height="4" fill="#868686" opacity="1"/><rect x="0" y="4" width="4" height="4" fill="#868686" opacity="1"/><rect x="4" y="4" width="4" height="4" fill="#949494" opacity="1"/><rect x="8" y="4" width="4" height="4" fill="#868686" opacity="1"/><rect x="12" y="4" width="4" height="4" fill="#727272" opacity="1"/><rect x="16" y="4" width="4" height="4" fill="#7c7c7c" opacity="1"/><rect x="20" y="4" width="4" height="4" fill="#7c7c7c" opacity="1"/><rect x="24" y="4" width="4" height="4" fill="#808080" opacity="1"/><rect x="28" y="4" width="4" height="4" fill="#727272" opacity="1"/><rect x="32" y="4" width="4" height="4" fill="#7c7c7c" opacity="1"/><rect x="36" y="4" width="4" height="4" fill="#949494" opacity="1"/><rect x="40" y="4" width="4" height="4" fill="#8e8e8e" opacity="1"/><rect x="44" y="4" width="4" height="4" fill="#787878" opacity="1"/><rect x="48" y="4" width="4" height="4" fill="#787878" opacity="1"/><rect x="52" y="4" width="4" height="4" fill="#9a9a9a" opacity="1"/><rect x="56" y="4" width="4" height="4" fill="#7c7c7c" opacity="1"/><rect x="60" y="4" width="4" height="4" fill="#7c7c7c" opacity="1"/><rect x="64" y="4" width="4" height="4" fill="#808080" opacity="1"/><rect x="68" y="4" width="4" height="4" fill="#868686" opacity="1"/><rect x="72" y="4" width="4" height="4" fill="#7c7c7c" opacity="1"/><rect x="0" y="8" width="4" height="4" fill="#9a9a9a" opacity="0.45"/><rect x="4" y="8" width="4" height="4" fill="#8e8e8e" opacity="0.45"/><rect x="8" y="8" width="4" height="4" fill="#949494" opacity="0.45"/><rect x="12" y="8" width="4" height="4" fill="#9a9a9a" opacity="0.45"/><rect x="16" y="8" width="4" height="4" fill="#8e8e8e" opacity="0.45"/><rect x="20" y="8" width="4" height="4" fill="#9a9a9a" opacity="0.45"/><rect x="24" y="8" width="4" height="4" fill="#949494" opacity="0.45"/><rect x="28" y="8" width="4" height="4" fill="#949494" opacity="0.45"/><rect x="32" y="8" width="4" height="4" fill="#7c7c7c" opacity="0.45"/><rect x="36" y="8" width="4" height="4" fill="#7c7c7c" opacity="0.45"/><rect x="40" y="8" width="4" height="4" fill="#7c7c7c" opacity="0.45"/><rect x="44" y="8" width="4" height="4" fill="#949494" opacity="0.45"/><rect x="48" y="8" width="4" height="4" fill="#949494" opacity="0.45"/><rect x="52" y="8" width="4" height="4" fill="#7c7c7c" opacity="0.45"/><rect x="56" y="8" width="4" height="4" fill="#727272" opacity="0.45"/><rect x="60" y="8" width="4" height="4" fill="#868686" opacity="0.45"/><rect x="64" y="8" width="4" height="4" fill="#787878" opacity="0.45"/><rect x="68" y="8" width="4" height="4" fill="#7c7c7c" opacity="0.45"/><rect x="72" y="8" width="4" height="4" fill="#7c7c7c" opacity="0.45"/></svg>
<svg class="a" style="left:174px;top:171px" width="18" height="12" viewBox="0 0 24 16"><path fill="#1c1c1c" d="M19.35 6.04C18.67 2.59 15.64 0 12 0 9.11 0 6.6 1.64 5.35 4.04 2.34 4.36 0 6.91 0 10c0 3.31 2.69 6 6 6h13c2.76 0 5-2.24 5-5 0-2.64-2.05-4.78-4.65-4.96zM17 9l-5 5-5-5h3V5h4v4h3z"/></svg>
<div class="a c" style="left:11px;top:913px;width:186px;height:27.5px;line-height:30px;border-radius:2px;background:#226690;color:#a9c3d4;font-size:10.4px;box-shadow:0 2px 3px rgba(0,0,0,.3)">ANALYSE FROM FILE</div>
<div class="a c" style="left:12px;top:949px;width:184px;height:39px;line-height:40px;border-radius:2px;background:#209653;color:#0c1a10;font-size:14.2px;box-shadow:0 2px 3px rgba(0,0,0,.3)"><span class="sq" style="transform:scaleX(.91)">ANALYSE</span></div>
</div>
<div class="a" style="left:255px;top:0;width:1px;height:1080px;background:#9a9a9a"></div>
<div id="sidebar" class="a">
<svg class="a" style="left:0;top:0" width="256" height="64" viewBox="0 0 256 64">
<circle cx="32" cy="32" r="24" fill="none" stroke="#1f6a97" stroke-width="4.2"/>
<path fill="#1f6a97" d="M12.2 22.2 C15 19.5 19.5 16.6 25.5 16.2 C31 16.2 35 18.5 38.5 21.8 C42 25 45.5 28.5 49.2 33.2 C49.4 35.5 48.8 37.6 47.6 39.2 C47.3 37.6 46.6 36.4 45.4 35.8 C42.5 34.6 39 34.8 36 35.6 C33.4 36.4 31.8 37.8 31 40 C30.4 43 29.6 45.5 28.2 48 C27.2 49.8 26 51.4 24.6 53.2 C16 51 9 43 8.5 32 C8.6 28.4 10 25 12.2 22.2Z"/>
<circle cx="33.8" cy="26.2" r="2" fill="#b9c3ca"/>
<g fill="none" stroke="#26658f" stroke-width="2.1">
<path d="M127.5 10.3H112.8V33.6H127.5M112.8 21.9H125.6"/>
<circle cx="141.2" cy="25.9" r="8"/><path d="M149.3 17.3V34.5"/>
<circle cx="165" cy="25.9" r="8"/><path d="M173.2 17.3V33.5C173.2 38.5 169.5 41 166 40.6C163.6 40.4 161.8 39.4 160.6 38"/>
<path d="M183.1 9.4V34.5"/>
<path d="M190.8 25.3H207.3C207 20.5 203.2 17.9 199 17.9C194.4 17.9 190.8 21.4 190.8 25.9C190.8 30.4 194.4 33.9 199 33.9C201.8 33.9 204.2 32.6 205.8 30.3"/>
</g></svg>
<div class="a c" style="left:60px;width:198px;top:47px;height:16px;line-height:16px;font-size:11.5px;letter-spacing:-.4px;color:#3d3d3d">Copyright © Emergent Design</div>
<div class="a" style="left:0;top:64px;width:255px;height:1px;background:#9c9c9c"></div>
<div class="a m c" style="left:0;width:255px;top:66px;height:16px;line-height:16px;font-size:13.2px;color:#707070">2021-11-03 17:44:02 UTC</div>
<div class="a h" style="top:99px;letter-spacing:.45px">Statistics</div>
<div class="a st r lbl" style="left:0;width:97px;top:126px">Order</div>
<div class="a st r lbl" style="left:0;width:97px;top:149px">Produced</div>
<div class="a st" style="left:107.5px;top:149px;color:#111">7635.6 m²</div>
<div class="a st" style="left:107.5px;top:172px;color:#111">53143.5 kg</div>
<div class="a st r lbl" style="left:0;width:97px;top:195px">Rejected</div>
<div class="a st" style="left:107.5px;top:195px;color:#111">387.6 m²</div>
<div class="a st" style="left:107.5px;top:218px;color:#111">2697.5 kg</div>
<svg class="a" style="left:106px;top:128px" width="104" height="16" shape-rendering="crispEdges"><rect x="0" y="0" width="4" height="4" fill="#96969a"/><rect x="4" y="0" width="4" height="4" fill="#8d8d8d"/><rect x="8" y="0" width="4" height="4" fill="#b8b8b8"/><rect x="12" y="0" width="4" height="4" fill="#7f7f7f"/><rect x="16" y="0" width="4" height="4" fill="#9a9a9a"/><rect x="20" y="0" width="4" height="4" fill="#8a8a8e"/><rect x="24" y="0" width="4" height="4" fill="#8d8d8d"/><rect x="28" y="0" width="4" height="4" fill="#a9a9a9"/><rect x="32" y="0" width="4" height="4" fill="#7b7b7b"/><rect x="36" y="0" width="4" height="4" fill="#b6b6b6"/><rect x="40" y="0" width="4" height="4" fill="#838387"/><rect x="44" y="0" width="4" height="4" fill="#a0a0a0"/><rect x="48" y="0" width="4" height="4" fill="#828282"/><rect x="52" y="0" width="4" height="4" fill="#818181"/><rect x="56" y="0" width="4" height="4" fill="#9e9e9e"/><rect x="60" y="0" width="4" height="4" fill="#a0a0a4"/><rect x="64" y="0" width="4" height="4" fill="#b8b8b8"/><rect x="68" y="0" width="4" height="4" fill="#8a8a8a"/><rect x="72" y="0" width="4" height="4" fill="#b3b3b3"/><rect x="76" y="0" width="4" height="4" fill="#7f7f7f"/><rect x="80" y="0" width="4" height="4" fill="#aeaeb2"/><rect x="84" y="0" width="4" height="4" fill="#7f7f7f"/><rect x="88" y="0" width="4" height="4" fill="#9f9f9f"/><rect x="92" y="0" width="4" height="4" fill="#b3b3b3"/><rect x="96" y="0" width="4" height="4" fill="#8f8f8f"/><rect x="100" y="0" width="4" height="4" fill="#919195"/><rect x="0" y="4" width="4" height="4" fill="#949498"/><rect x="4" y="4" width="4" height="4" fill="#8d8d8d"/><rect x="8" y="4" width="4" height="4" fill="#a8a8a8"/><rect x="12" y="4" width="4" height="4" fill="#848484"/><rect x="16" y="4" width="4" height="4" fill="#8f8f8f"/><rect x="20" y="4" width="4" height="4" fill="#838387"/><rect x="24" y="4" width="4" height="4" fill="#8a8a8a"/><rect x="28" y="4" width="4" height="4" fill="#b3b3b3"/><rect x="32" y="4" width="4" height="4" fill="#888888"/><rect x="36" y="4" width="4" height="4" fill="#b3b3b3"/><rect x="40" y="4" width="4" height="4" fill="#8d8d91"/><rect x="44" y="4" width="4" height="4" fill="#9d9d9d"/><rect x="48" y="4" width="4" height="4" fill="#7f7f7f"/><rect x="52" y="4" width="4" height="4" fill="#868686"/><rect x="56" y="4" width="4" height="4" fill="#929292"/><rect x="60" y="4" width="4" height="4" fill="#909094"/><rect x="64" y="4" width="4" height="4" fill="#ababab"/><rect x="68" y="4" width="4" height="4" fill="#8a8a8a"/><rect x="72" y="4" width="4" height="4" fill="#adadad"/><rect x="76" y="4" width="4" height="4" fill="#838383"/><rect x="80" y="4" width="4" height="4" fill="#b4b4b8"/><rect x="84" y="4" width="4" height="4" fill="#848484"/><rect x="88" y="4" width="4" height="4" fill="#9c9c9c"/><rect x="92" y="4" width="4" height="4" fill="#b7b7b7"/><rect x="96" y="4" width="4" height="4" fill="#9b9b9b"/><rect x="100" y="4" width="4" height="4" fill="#a1a1a5"/><rect x="0" y="8" width="4" height="4" fill="#9a9a9e"/><rect x="4" y="8" width="4" height="4" fill="#8c8c8c"/><rect x="8" y="8" width="4" height="4" fill="#b9b9b9"/><rect x="12" y="8" width="4" height="4" fill="#888888"/><rect x="16" y="8" width="4" height="4" fill="#a1a1a1"/><rect x="20" y="8" width="4" height="4" fill="#828286"/><rect x="24" y="8" width="4" height="4" fill="#858585"/><rect x="28" y="8" width="4" height="4" fill="#a7a7a7"/><rect x="32" y="8" width="4" height="4" fill="#838383"/><rect x="36" y="8" width="4" height="4" fill="#acacac"/><rect x="40" y="8" width="4" height="4" fill="#858589"/><rect x="44" y="8" width="4" height="4" fill="#a0a0a0"/><rect x="48" y="8" width="4" height="4" fill="#8d8d8d"/><rect x="52" y="8" width="4" height="4" fill="#8d8d8d"/><rect x="56" y="8" width="4" height="4" fill="#929292"/><rect x="60" y="8" width="4" height="4" fill="#959599"/><rect x="64" y="8" width="4" height="4" fill="#b9b9b9"/><rect x="68" y="8" width="4" height="4" fill="#838383"/><rect x="72" y="8" width="4" height="4" fill="#b0b0b0"/><rect x="76" y="8" width="4" height="4" fill="#7e7e7e"/><rect x="80" y="8" width="4" height="4" fill="#a9a9ad"/><rect x="84" y="8" width="4" height="4" fill="#8a8a8a"/><rect x="88" y="8" width="4" height="4" fill="#9e9e9e"/><rect x="92" y="8" width="4" height="4" fill="#a9a9a9"/><rect x="96" y="8" width="4" height="4" fill="#9a9a9a"/><rect x="100" y="8" width="4" height="4" fill="#919195"/><rect x="0" y="12" width="4" height="4" fill="#a5a5a9"/><rect x="4" y="12" width="4" height="4" fill="#999999"/><rect x="8" y="12" width="4" height="4" fill="#a9a9a9"/><rect x="12" y="12" width="4" height="4" fill="#9b9b9b"/><rect x="16" y="12" width="4" height="4" fill="#a5a5a5"/><rect x="20" y="12" width="4" height="4" fill="#9d9da1"/><rect x="24" y="12" width="4" height="4" fill="#999999"/><rect x="28" y="12" width="4" height="4" fill="#a9a9a9"/><rect x="32" y="12" width="4" height="4" fill="#989898"/><rect x="36" y="12" width="4" height="4" fill="#aeaeae"/><rect x="40" y="12" width="4" height="4" fill="#9f9fa3"/><rect x="44" y="12" width="4" height="4" fill="#a3a3a3"/><rect x="48" y="12" width="4" height="4" fill="#9e9e9e"/><rect x="52" y="12" width="4" height="4" fill="#9b9b9b"/><rect x="56" y="12" width="4" height="4" fill="#a6a6a6"/><rect x="60" y="12" width="4" height="4" fill="#a2a2a6"/><rect x="64" y="12" width="4" height="4" fill="#a9a9a9"/><rect x="68" y="12" width="4" height="4" fill="#9b9b9b"/><rect x="72" y="12" width="4" height="4" fill="#a9a9a9"/><rect x="76" y="12" width="4" height="4" fill="#989898"/><rect x="80" y="12" width="4" height="4" fill="#aaaaae"/><rect x="84" y="12" width="4" height="4" fill="#9e9e9e"/><rect x="88" y="12" width="4" height="4" fill="#a0a0a0"/><rect x="92" y="12" width="4" height="4" fill="#ababab"/><rect x="96" y="12" width="4" height="4" fill="#a5a5a5"/><rect x="100" y="12" width="4" height="4" fill="#a3a3a7"/></svg>
<div class="a h" style="top:257px">Rolling averages (mm)</div>
<div class="a c t13" style="left:-14px;width:80px;top:284px;color:#505050">Lane</div>
<div class="a c t13" style="left:-14px;width:80px;top:304px;color:#111">0</div>
<div class="a c t13" style="left:45px;width:80px;top:284px;color:#505050">Width</div>
<div class="a c t13" style="left:45px;width:80px;top:304px;color:#111">1996.7</div>
<div class="a c t13" style="left:113px;width:80px;top:284px;color:#505050">Length</div>
<div class="a c t13" style="left:113px;width:80px;top:304px;color:#111">1191.0</div>
<div class="a c t13" style="left:180px;width:80px;top:284px;color:#505050">Height</div>
<div class="a c t13" style="left:180px;width:80px;top:304px;color:#111">278.5</div>
<div class="a h" style="top:340px">Status</div>
<div class="a pill g" style="top:367px">PASSED</div>
<div class="a pill g" style="top:417px">PROXIMITY</div>
<div class="a pill g" style="top:458px">OVERFLOW</div>
<div class="a pill g" style="top:499px">RECIPE</div>
<div class="a pill g" style="top:549px">SYSTEM OK</div>
<div class="a pill rd" style="top:590px">DISABLED</div>
<div class="a" style="left:16px;top:408px;width:223px;height:0;border-top:1px dashed #999"></div>
<div class="a" style="left:16px;top:540px;width:223px;height:0;border-top:1px dashed #999"></div>
<div class="a c" style="left:87px;width:80px;top:829px;height:16px;line-height:16px;font-size:14px;color:#222">10%</div>
<div class="a" style="left:25px;top:847px;width:1px;height:203px;background:#a0a0a0"></div>
<div class="a" style="left:51px;top:847px;width:1px;height:203px;background:#a0a0a0"></div>
<div class="a" style="left:76px;top:847px;width:1px;height:203px;background:#a0a0a0"></div>
<div class="a" style="left:102px;top:847px;width:1px;height:203px;background:#a0a0a0"></div>
<div class="a" style="left:152px;top:847px;width:1px;height:203px;background:#a0a0a0"></div>
<div class="a" style="left:178px;top:847px;width:1px;height:203px;background:#a0a0a0"></div>
<div class="a" style="left:203px;top:847px;width:1px;height:203px;background:#a0a0a0"></div>
<div class="a" style="left:229px;top:847px;width:1px;height:203px;background:#a0a0a0"></div>
<div class="a" style="left:0;top:849px;width:255px;height:1px;background:#a2a2a2"></div>
<div class="a" style="left:0;top:877px;width:255px;height:1px;background:#a2a2a2"></div>
<div class="a" style="left:0;top:905px;width:255px;height:1px;background:#a2a2a2"></div>
<div class="a" style="left:0;top:933px;width:255px;height:1px;background:#a2a2a2"></div>
<div class="a" style="left:0;top:961px;width:255px;height:1px;background:#a2a2a2"></div>
<div class="a" style="left:0;top:989px;width:255px;height:1px;background:#a2a2a2"></div>
<div class="a" style="left:0;top:1017px;width:255px;height:1px;background:#a2a2a2"></div>
<div class="a" style="left:0;top:1045px;width:255px;height:1px;background:#a2a2a2"></div>
<div class="a" style="left:126.5px;top:847px;width:1.3px;height:203px;background:#b03030"></div>
<div class="a r" style="left:100px;width:152.5px;top:857px;height:16px;line-height:16px;font-size:13px;color:#222">Dimensional</div>
<div class="a r" style="left:100px;width:152.5px;top:885px;height:16px;line-height:16px;font-size:13px;color:#222">Burn</div>
<div class="a r" style="left:100px;width:152.5px;top:913px;height:16px;line-height:16px;font-size:13px;color:#222">Hotspot</div>
<div class="a r" style="left:100px;width:152.5px;top:941px;height:16px;line-height:16px;font-size:13px;color:#222">Deformation</div>
<div class="a r" style="left:100px;width:152.5px;top:969px;height:16px;line-height:16px;font-size:13px;color:#222">Visible</div>
<div class="a r" style="left:100px;width:152.5px;top:997px;height:16px;line-height:16px;font-size:13px;color:#222">Side</div>
<div class="a r" style="left:100px;width:152.5px;top:1025px;height:16px;line-height:16px;font-size:13px;color:#222">Crosscut</div>
<div class="a" style="left:0;top:1066px;width:255px;height:14px;background:#21628a"></div>
<svg class="a" style="left:112px;top:1068px" width="32" height="8" shape-rendering="crispEdges"><rect x="0" y="0" width="4" height="4" fill="#4f84a8" opacity="1"/><rect x="4" y="0" width="4" height="4" fill="#5f8fb0" opacity="1"/><rect x="8" y="0" width="4" height="4" fill="#8fb3cb" opacity="1"/><rect x="12" y="0" width="4" height="4" fill="#7fa6c0" opacity="1"/><rect x="16" y="0" width="4" height="4" fill="#7fa6c0" opacity="1"/><rect x="20" y="0" width="4" height="4" fill="#3f78a0" opacity="1"/><rect x="24" y="0" width="4" height="4" fill="#7fa6c0" opacity="1"/><rect x="28" y="0" width="4" height="4" fill="#4f84a8" opacity="1"/><rect x="0" y="4" width="4" height="4" fill="#3f78a0" opacity="1"/><rect x="4" y="4" width="4" height="4" fill="#7fa6c0" opacity="1"/><rect x="8" y="4" width="4" height="4" fill="#3f78a0" opacity="1"/><rect x="12" y="4" width="4" height="4" fill="#5f8fb0" opacity="1"/><rect x="16" y="4" width="4" height="4" fill="#7fa6c0" opacity="1"/><rect x="20" y="4" width="4" height="4" fill="#7fa6c0" opacity="1"/><rect x="24" y="4" width="4" height="4" fill="#8fb3cb" opacity="1"/><rect x="28" y="4" width="4" height="4" fill="#8fb3cb" opacity="1"/></svg>
</div>
<div class="a" style="left:518px;top:65px;width:1152px;height:756px;background:#fff">
<div class="a" style="left:0;top:0;width:1152px;height:27px;background:#2190c9"></div>
<div class="a c" style="left:56px;width:200px;top:4px;height:20px;line-height:20px;font-size:15px;color:#f2f8fc">Recipe</div>
<div class="a c" style="left:576px;width:200px;top:4px;height:20px;line-height:20px;font-size:15px;color:#f2f8fc">Statistics</div>
<div class="a c" style="left:996px;width:200px;top:4px;height:20px;line-height:20px;font-size:15px;color:#f2f8fc">Rejects</div>
<div class="a" style="left:312px;top:27px;width:1px;height:674px;background:#e2e2e2"></div>
<div class="a" style="left:1039px;top:27px;width:1px;height:674px;background:#e2e2e2"></div>
<svg class="a" style="left:293px;top:36px" width="11" height="10" viewBox="0 0 11 10"><rect x="0.5" y="0.5" width="10" height="9" fill="none" stroke="#222" stroke-width="1.4"/><path d="M0 3.5H11M0 6.5H11M4 0V10M7.3 0V10" stroke="#222" stroke-width="1.2"/></svg>
<div class="a r" style="left:0;width:64px;top:48px;height:16px;line-height:16px;font-size:12px;font-style:italic;color:#444;transform:scaleX(.93);transform-origin:100% 50%">Order</div>
<div class="a r" style="left:0;width:64px;top:69.5px;height:16px;line-height:16px;font-size:12px;font-style:italic;color:#444;transform:scaleX(.93);transform-origin:100% 50%">Created</div>
<div class="a" style="left:70px;top:69.5px;height:16px;line-height:16px;font-size:13px;color:#111">2021-11-03 05:29:30 UTC</div>
<div class="a r" style="left:0;width:64px;top:91.5px;height:16px;line-height:16px;font-size:12px;font-style:italic;color:#444;transform:scaleX(.93);transform-origin:100% 50%">Revision</div>
<div class="a" style="left:70px;top:91.5px;height:16px;line-height:16px;font-size:13px;color:#111">0</div>
<div class="a r" style="left:0;width:64px;top:113.5px;height:16px;line-height:16px;font-size:12px;font-style:italic;color:#444;transform:scaleX(.93);transform-origin:100% 50%">Variants</div>
<div class="a" style="left:70px;top:113.5px;height:16px;line-height:16px;font-size:13px;color:#111">1</div>
<svg class="a" style="left:70px;top:51px" width="84" height="12" shape-rendering="crispEdges"><rect x="0" y="0" width="4" height="4" fill="#dadada" opacity="1"/><rect x="4" y="0" width="4" height="4" fill="#f6f6f6" opacity="1"/><rect x="8" y="0" width="4" height="4" fill="#d4d4d4" opacity="1"/><rect x="12" y="0" width="4" height="4" fill="#ececec" opacity="1"/><rect x="16" y="0" width="4" height="4" fill="#f0f0f0" opacity="1"/><rect x="20" y="0" width="4" height="4" fill="#d4d4d4" opacity="1"/><rect x="24" y="0" width="4" height="4" fill="#e8e8e8" opacity="1"/><rect x="28" y="0" width="4" height="4" fill="#e0e0e0" opacity="1"/><rect x="32" y="0" width="4" height="4" fill="#f6f6f6" opacity="1"/><rect x="36" y="0" width="4" height="4" fill="#ececec" opacity="1"/><rect x="40" y="0" width="4" height="4" fill="#f0f0f0" opacity="1"/><rect x="44" y="0" width="4" height="4" fill="#cfcfcf" opacity="1"/><rect x="48" y="0" width="4" height="4" fill="#e0e0e0" opacity="1"/><rect x="52" y="0" width="4" height="4" fill="#f0f0f0" opacity="1"/><rect x="56" y="0" width="4" height="4" fill="#d4d4d4" opacity="1"/><rect x="60" y="0" width="4" height="4" fill="#f0f0f0" opacity="1"/><rect x="64" y="0" width="4" height="4" fill="#cfcfcf" opacity="1"/><rect x="68" y="0" width="4" height="4" fill="#dadada" opacity="1"/><rect x="72" y="0" width="4" height="4" fill="#e8e8e8" opacity="1"/><rect x="76" y="0" width="4" height="4" fill="#cfcfcf" opacity="1"/><rect x="80" y="0" width="4" height="4" fill="#e8e8e8" opacity="1"/><rect x="0" y="4" width="4" height="4" fill="#e0e0e0" opacity="1"/><rect x="4" y="4" width="4" height="4" fill="#e8e8e8" opacity="1"/><rect x="8" y="4" width="4" height="4" fill="#ececec" opacity="1"/><rect x="12" y="4" width="4" height="4" fill="#e8e8e8" opacity="1"/><rect x="16" y="4" width="4" height="4" fill="#e8e8e8" opacity="1"/><rect x="20" y="4" width="4" height="4" fill="#d4d4d4" opacity="1"/><rect x="24" y="4" width="4" height="4" fill="#d4d4d4" opacity="1"/><rect x="28" y="4" width="4" height="4" fill="#f0f0f0" opacity="1"/><rect x="32" y="4" width="4" height="4" fill="#f0f0f0" opacity="1"/><rect x="36" y="4" width="4" height="4" fill="#e8e8e8" opacity="1"/><rect x="40" y="4" width="4" height="4" fill="#e8e8e8" opacity="1"/><rect x="44" y="4" width="4" height="4" fill="#dadada" opacity="1"/><rect x="48" y="4" width="4" height="4" fill="#f6f6f6" opacity="1"/><rect x="52" y="4" width="4" height="4" fill="#f0f0f0" opacity="1"/><rect x="56" y="4" width="4" height="4" fill="#f0f0f0" opacity="1"/><rect x="60" y="4" width="4" height="4" fill="#e8e8e8" opacity="1"/><rect x="64" y="4" width="4" height="4" fill="#f0f0f0" opacity="1"/><rect x="68" y="4" width="4" height="4" fill="#cfcfcf" opacity="1"/><rect x="72" y="4" width="4" height="4" fill="#dadada" opacity="1"/><rect x="76" y="4" width="4" height="4" fill="#d4d4d4" opacity="1"/><rect x="80" y="4" width="4" height="4" fill="#f6f6f6" opacity="1"/><rect x="0" y="8" width="4" height="4" fill="#cfcfcf" opacity="1"/><rect x="4" y="8" width="4" height="4" fill="#e8e8e8" opacity="1"/><rect x="8" y="8" width="4" height="4" fill="#e8e8e8" opacity="1"/><rect x="12" y="8" width="4" height="4" fill="#dadada" opacity="1"/><rect x="16" y="8" width="4" height="4" fill="#e0e0e0" opacity="1"/><rect x="20" y="8" width="4" height="4" fill="#f6f6f6" opacity="1"/><rect x="24" y="8" width="4" height="4" fill="#dadada" opacity="1"/><rect x="28" y="8" width="4" height="4" fill="#d4d4d4" opacity="1"/><rect x="32" y="8" width="4" height="4" fill="#f6f6f6" opacity="1"/><rect x="36" y="8" width="4" height="4" fill="#e0e0e0" opacity="1"/><rect x="40" y="8" width="4" height="4" fill="#dadada" opacity="1"/><rect x="44" y="8" width="4" height="4" fill="#f6f6f6" opacity="1"/><rect x="48" y="8" width="4" height="4" fill="#dadada" opacity="1"/><rect x="52" y="8" width="4" height="4" fill="#ececec" opacity="1"/><rect x="56" y="8" width="4" height="4" fill="#f6f6f6" opacity="1"/><rect x="60" y="8" width="4" height="4" fill="#e8e8e8" opacity="1"/><rect x="64" y="8" width="4" height="4" fill="#ececec" opacity="1"/><rect x="68" y="8" width="4" height="4" fill="#ececec" opacity="1"/><rect x="72" y="8" width="4" height="4" fill="#e8e8e8" opacity="1"/><rect x="76" y="8" width="4" height="4" fill="#d4d4d4" opacity="1"/><rect x="80" y="8" width="4" height="4" fill="#dadada" opacity="1"/></svg>
<div class="a" style="left:8px;top:141px;width:296px;height:102px;border:1px solid #dcdcdc"></div>
<div class="a" style="left:33.5px;top:142px;height:34px;line-height:34px;font-size:15px;color:#222">Overall</div>
<svg class="a" style="left:261px;top:154px" width="12" height="8" viewBox="0 0 12 8"><path d="M1 1L6 6L11 1" fill="none" stroke="#444" stroke-width="1.7"/></svg>
<div class="a" style="left:8px;top:174px;width:296px;height:2px;background:#dcdcdc"></div>
<div class="a" style="left:33.5px;top:176px;height:34px;line-height:34px;font-size:15px;color:#222">Dimensional Thresholds</div>
<svg class="a" style="left:261px;top:188px" width="12" height="8" viewBox="0 0 12 8"><path d="M1 1L6 6L11 1" fill="none" stroke="#444" stroke-width="1.7"/></svg>
<div class="a" style="left:8px;top:208px;width:296px;height:2px;background:#dcdcdc"></div>
<div class="a" style="left:33.5px;top:210px;height:34px;line-height:34px;font-size:15px;color:#222">Defects Thresholds</div>
<svg class="a" style="left:261px;top:222px" width="12" height="8" viewBox="0 0 12 8"><path d="M1 1L6 6L11 1" fill="none" stroke="#444" stroke-width="1.7"/></svg>
<svg class="a" style="left:0;top:0" width="1152" height="756" viewBox="518 65 1152 756" font-family="Liberation Sans, sans-serif">
<path d="M1008.6 108V687" stroke="#f6f6f6" stroke-width="1"/>
<path d="M1020.31 108V687" stroke="#f6f6f6" stroke-width="1"/>
<path d="M1032.02 108V687" stroke="#f6f6f6" stroke-width="1"/>
<path d="M1043.73 108V687" stroke="#f6f6f6" stroke-width="1"/>
<path d="M1055.44 108V687" stroke="#f6f6f6" stroke-width="1"/>
<path d="M1067.15 108V687" stroke="#f6f6f6" stroke-width="1"/>
<path d="M1078.86 108V687" stroke="#f6f6f6" stroke-width="1"/>
<path d="M1090.57 108V687" stroke="#f6f6f6" stroke-width="1"/>
<path d="M1102.28 108V687" stroke="#f6f6f6" stroke-width="1"/>
<path d="M1113.99 108V687" stroke="#f6f6f6" stroke-width="1"/>
<path d="M1125.7 108V687" stroke="#f6f6f6" stroke-width="1"/>
<path d="M1137.41 108V687" stroke="#f6f6f6" stroke-width="1"/>
<path d="M1149.12 108V687" stroke="#f6f6f6" stroke-width="1"/>
<path d="M1160.83 108V687" stroke="#f6f6f6" stroke-width="1"/>
<path d="M1172.54 108V687" stroke="#f6f6f6" stroke-width="1"/>
<path d="M1184.25 108V687" stroke="#f6f6f6" stroke-width="1"/>
<path d="M1195.96 108V687" stroke="#f6f6f6" stroke-width="1"/>
<path d="M1207.67 108V687" stroke="#f6f6f6" stroke-width="1"/>
<path d="M1219.38 108V687" stroke="#f6f6f6" stroke-width="1"/>
<path d="M1231.09 108V687" stroke="#f6f6f6" stroke-width="1"/>
<path d="M1242.8 108V687" stroke="#f6f6f6" stroke-width="1"/>
<path d="M1254.51 108V687" stroke="#f6f6f6" stroke-width="1"/>
<path d="M1266.22 108V687" stroke="#f6f6f6" stroke-width="1"/>
<path d="M1277.93 108V687" stroke="#f6f6f6" stroke-width="1"/>
<path d="M1289.64 108V687" stroke="#f6f6f6" stroke-width="1"/>
<path d="M1301.35 108V687" stroke="#f6f6f6" stroke-width="1"/>
<path d="M1313.06 108V687" stroke="#f6f6f6" stroke-width="1"/>
<path d="M1324.77 108V687" stroke="#f6f6f6" stroke-width="1"/>
<path d="M1336.48 108V687" stroke="#f6f6f6" stroke-width="1"/>
<path d="M1348.19 108V687" stroke="#f6f6f6" stroke-width="1"/>
<path d="M1359.9 108V687" stroke="#f6f6f6" stroke-width="1"/>
<path d="M1371.61 108V687" stroke="#f6f6f6" stroke-width="1"/>
<path d="M1383.32 108V687" stroke="#f6f6f6" stroke-width="1"/>
<path d="M1395.03 108V687" stroke="#f6f6f6" stroke-width="1"/>
<path d="M1406.74 108V687" stroke="#f6f6f6" stroke-width="1"/>
<path d="M1418.45 108V687" stroke="#f6f6f6" stroke-width="1"/>
<path d="M1430.16 108V687" stroke="#f6f6f6" stroke-width="1"/>
<path d="M997.5 102V686.5H1433" fill="none" stroke="#6a6a6a" stroke-width="1.1"/>
<text x="996.5" y="689.8" font-size="9" text-anchor="end" fill="#222">0%</text>
<text x="996.5" y="631.3" font-size="9" text-anchor="end" fill="#222">1%</text>
<text x="996.5" y="572.8" font-size="9" text-anchor="end" fill="#222">2%</text>
<text x="996.5" y="514.3" font-size="9" text-anchor="end" fill="#222">3%</text>
<text x="996.5" y="455.8" font-size="9" text-anchor="end" fill="#222">4%</text>
<text x="996.5" y="397.3" font-size="9" text-anchor="end" fill="#222">5%</text>
<text x="996.5" y="338.8" font-size="9" text-anchor="end" fill="#222">6%</text>
<text x="996.5" y="280.3" font-size="9" text-anchor="end" fill="#222">7%</text>
<text x="996.5" y="221.8" font-size="9" text-anchor="end" fill="#222">8%</text>
<text x="996.5" y="163.3" font-size="9" text-anchor="end" fill="#222">9%</text>
<text x="996.5" y="104.8" font-size="9" text-anchor="end" fill="#222">10%</text>
<rect x="1011.3" y="426" width="14" height="260.5" fill="#ff8080"/>
<rect x="1025.3" y="489" width="14" height="197.5" fill="#8080ff"/>
<text transform="translate(1024.8,695.5) rotate(45)" font-size="14" fill="#111">Overall</text>
<rect x="1053.45" y="681" width="14" height="5.5" fill="#ff8080"/>
<rect x="1067.45" y="681" width="14" height="5.5" fill="#8080ff"/>
<text transform="translate(1066.95,695.5) rotate(45)" font-size="14" fill="#111">Bulge</text>
<rect x="1095.6" y="681" width="14" height="5.5" fill="#ff8080"/>
<rect x="1109.6" y="681" width="14" height="5.5" fill="#8080ff"/>
<text transform="translate(1109.1,695.5) rotate(45)" font-size="14" fill="#111">Burn</text>
<rect x="1137.75" y="675.5" width="14" height="11" fill="#ff8080"/>
<rect x="1151.75" y="675.5" width="14" height="11" fill="#8080ff"/>
<text transform="translate(1151.25,695.5) rotate(45)" font-size="14" fill="#111">Gross</text>
<rect x="1179.9" y="656.5" width="14" height="30" fill="#ff8080"/>
<rect x="1193.9" y="656.5" width="14" height="30" fill="#8080ff"/>
<text transform="translate(1193.4,695.5) rotate(45)" font-size="14" fill="#111">Hotspot (abs)</text>
<rect x="1222.05" y="681" width="14" height="5.5" fill="#ff8080"/>
<rect x="1236.05" y="675.5" width="14" height="11" fill="#8080ff"/>
<text transform="translate(1235.55,695.5) rotate(45)" font-size="14" fill="#111">Length</text>
<rect x="1264.2" y="678.5" width="14" height="8" fill="#ff8080"/>
<text transform="translate(1277.7,695.5) rotate(45)" font-size="14" fill="#111">Missing slab</text>
<rect x="1306.35" y="618" width="14" height="68.5" fill="#ff8080"/>
<text transform="translate(1319.85,695.5) rotate(45)" font-size="14" fill="#111">Operator</text>
<rect x="1348.5" y="642.5" width="14" height="44" fill="#ff8080"/>
<rect x="1362.5" y="642.5" width="14" height="44" fill="#8080ff"/>
<text transform="translate(1362,695.5) rotate(45)" font-size="14" fill="#111">Side defect</text>
<rect x="1390.65" y="588" width="14" height="98.5" fill="#ff8080"/>
<rect x="1404.65" y="588" width="14" height="98.5" fill="#8080ff"/>
<text transform="translate(1404.15,695.5) rotate(45)" font-size="14" fill="#111">Side hole</text>
<text transform="translate(969,393) rotate(-90)" font-size="14" text-anchor="middle" fill="#999">Rejection Percentage</text>
<clipPath id="cp"><rect x="1558" y="92" width="112" height="674"/></clipPath><g clip-path="url(#cp)">
<circle cx="1576" cy="114" r="4.3" fill="#fff" stroke="#ff8080" stroke-width="1"/>
<circle cx="1591" cy="114" r="4.8" fill="#8080ff"/>
<text x="1604" y="118.6" font-size="13" fill="#111">99</text>
<circle cx="1576" cy="132" r="4.3" fill="#fff" stroke="#ff8080" stroke-width="1"/>
<circle cx="1591" cy="132" r="4.8" fill="#8080ff"/>
<text x="1604" y="136.6" font-size="13" fill="#111">104</text>
<circle cx="1576" cy="150" r="4.8" fill="#ff8080"/>
<circle cx="1591" cy="150" r="4.8" fill="#8080ff"/>
<text x="1604" y="154.6" font-size="13" fill="#a31a1a">132</text>
<circle cx="1576" cy="168" r="4.8" fill="#ff8080"/>
<circle cx="1591" cy="168" r="4.8" fill="#8080ff"/>
<text x="1604" y="172.6" font-size="13" fill="#a31a1a">138</text>
<circle cx="1576" cy="186" r="4.8" fill="#ff8080"/>
<circle cx="1591" cy="186" r="4.8" fill="#8080ff"/>
<text x="1604" y="190.6" font-size="13" fill="#a31a1a">464</text>
<circle cx="1576" cy="204" r="4.8" fill="#ff8080"/>
<circle cx="1591" cy="204" r="4.3" fill="#fff" stroke="#8080ff" stroke-width="1"/>
<text x="1604" y="208.6" font-size="13" fill="#a31a1a">723</text>
<circle cx="1576" cy="222" r="4.8" fill="#ff8080"/>
<circle cx="1591" cy="222" r="4.3" fill="#fff" stroke="#8080ff" stroke-width="1"/>
<text x="1604" y="226.6" font-size="13" fill="#a31a1a">900</text>
<circle cx="1576" cy="240" r="4.8" fill="#ff8080"/>
<circle cx="1591" cy="240" r="4.3" fill="#fff" stroke="#8080ff" stroke-width="1"/>
<text x="1604" y="244.6" font-size="13" fill="#a31a1a">906</text>
<circle cx="1576" cy="258" r="4.8" fill="#ff8080"/>
<circle cx="1591" cy="258" r="4.3" fill="#fff" stroke="#8080ff" stroke-width="1"/>
<text x="1604" y="262.6" font-size="13" fill="#a31a1a">1005</text>
<circle cx="1576" cy="276" r="4.8" fill="#ff8080"/>
<circle cx="1591" cy="276" r="4.3" fill="#fff" stroke="#8080ff" stroke-width="1"/>
<text x="1604" y="280.6" font-size="13" fill="#a31a1a">1011</text>
<circle cx="1576" cy="294" r="4.8" fill="#ff8080"/>
<circle cx="1591" cy="294" r="4.8" fill="#8080ff"/>
<text x="1604" y="298.6" font-size="13" fill="#a31a1a">1171</text>
<circle cx="1576" cy="312" r="4.8" fill="#ff8080"/>
<circle cx="1591" cy="312" r="4.8" fill="#8080ff"/>
<text x="1604" y="316.6" font-size="13" fill="#a31a1a">1221</text>
<circle cx="1576" cy="330" r="4.8" fill="#ff8080"/>
<circle cx="1591" cy="330" r="4.8" fill="#8080ff"/>
<text x="1604" y="334.6" font-size="13" fill="#a31a1a">1226</text>
<circle cx="1576" cy="348" r="4.8" fill="#ff8080"/>
<circle cx="1591" cy="348" r="4.3" fill="#fff" stroke="#8080ff" stroke-width="1"/>
<text x="1604" y="352.6" font-size="13" fill="#a31a1a">1232</text>
<circle cx="1576" cy="366" r="4.8" fill="#ff8080"/>
<circle cx="1591" cy="366" r="4.3" fill="#fff" stroke="#8080ff" stroke-width="1"/>
<text x="1604" y="370.6" font-size="13" fill="#a31a1a">1237</text>
<circle cx="1576" cy="384" r="4.8" fill="#ff8080"/>
<circle cx="1591" cy="384" r="4.8" fill="#8080ff"/>
<text x="1604" y="388.6" font-size="13" fill="#a31a1a">1376</text>
<circle cx="1576" cy="402" r="4.8" fill="#ff8080"/>
<circle cx="1591" cy="402" r="4.8" fill="#8080ff"/>
<text x="1604" y="406.6" font-size="13" fill="#a31a1a">1951</text>
<circle cx="1576" cy="420" r="4.8" fill="#ff8080"/>
<circle cx="1591" cy="420" r="4.8" fill="#8080ff"/>
<text x="1604" y="424.6" font-size="13" fill="#a31a1a">2039</text>
<circle cx="1576" cy="438" r="4.8" fill="#ff8080"/>
<circle cx="1591" cy="438" r="4.8" fill="#8080ff"/>
<text x="1604" y="442.6" font-size="13" fill="#a31a1a">2045</text>
<circle cx="1576" cy="456" r="4.8" fill="#ff8080"/>
<circle cx="1591" cy="456" r="4.8" fill="#8080ff"/>
<text x="1604" y="460.6" font-size="13" fill="#a31a1a">2144</text>
<circle cx="1576" cy="474" r="4.8" fill="#ff8080"/>
<circle cx="1591" cy="474" r="4.8" fill="#8080ff"/>
<text x="1604" y="478.6" font-size="13" fill="#a31a1a">2150</text>
<circle cx="1576" cy="492" r="4.8" fill="#ff8080"/>
<circle cx="1591" cy="492" r="4.8" fill="#8080ff"/>
<text x="1604" y="496.6" font-size="13" fill="#a31a1a">2161</text>
<circle cx="1576" cy="510" r="4.8" fill="#ff8080"/>
<circle cx="1591" cy="510" r="4.8" fill="#8080ff"/>
<text x="1604" y="514.6" font-size="13" fill="#a31a1a">2166</text>
<circle cx="1576" cy="528" r="4.8" fill="#ff8080"/>
<circle cx="1591" cy="528" r="4.8" fill="#8080ff"/>
<text x="1604" y="532.6" font-size="13" fill="#a31a1a">2194</text>
<circle cx="1576" cy="546" r="4.8" fill="#ff8080"/>
<circle cx="1591" cy="546" r="4.8" fill="#8080ff"/>
<text x="1604" y="550.6" font-size="13" fill="#a31a1a">2432</text>
<circle cx="1576" cy="564" r="4.8" fill="#ff8080"/>
<circle cx="1591" cy="564" r="4.3" fill="#fff" stroke="#8080ff" stroke-width="1"/>
<text x="1604" y="568.6" font-size="13" fill="#a31a1a">2437</text>
<circle cx="1576" cy="582" r="4.8" fill="#ff8080"/>
<circle cx="1591" cy="582" r="4.3" fill="#fff" stroke="#8080ff" stroke-width="1"/>
<text x="1604" y="586.6" font-size="13" fill="#a31a1a">2642</text>
<circle cx="1576" cy="600" r="4.8" fill="#ff8080"/>
<circle cx="1591" cy="600" r="4.8" fill="#8080ff"/>
<text x="1604" y="604.6" font-size="13" fill="#a31a1a">2736</text>
<circle cx="1576" cy="618" r="4.8" fill="#ff8080"/>
<circle cx="1591" cy="618" r="4.8" fill="#8080ff"/>
<text x="1604" y="622.6" font-size="13" fill="#a31a1a">2769</text>
<circle cx="1576" cy="636" r="4.8" fill="#ff8080"/>
<circle cx="1591" cy="636" r="4.8" fill="#8080ff"/>
<text x="1604" y="640.6" font-size="13" fill="#a31a1a">2918</text>
<circle cx="1576" cy="654" r="4.8" fill="#ff8080"/>
<circle cx="1591" cy="654" r="4.8" fill="#8080ff"/>
<text x="1604" y="658.6" font-size="13" fill="#a31a1a">2923</text>
<circle cx="1576" cy="672" r="4.8" fill="#ff8080"/>
<circle cx="1591" cy="672" r="4.8" fill="#8080ff"/>
<text x="1604" y="676.6" font-size="13" fill="#a31a1a">2990</text>
<circle cx="1576" cy="690" r="4.8" fill="#ff8080"/>
<circle cx="1591" cy="690" r="4.8" fill="#8080ff"/>
<text x="1604" y="694.6" font-size="13" fill="#a31a1a">3071</text>
<circle cx="1576" cy="708" r="4.8" fill="#ff8080"/>
<circle cx="1591" cy="708" r="4.8" fill="#8080ff"/>
<text x="1604" y="712.6" font-size="13" fill="#a31a1a">3077</text>
<circle cx="1576" cy="726" r="4.8" fill="#ff8080"/>
<circle cx="1591" cy="726" r="4.3" fill="#fff" stroke="#8080ff" stroke-width="1"/>
<text x="1604" y="730.6" font-size="13" fill="#a31a1a">3082</text>
<circle cx="1576" cy="744" r="4.8" fill="#ff8080"/>
<circle cx="1591" cy="744" r="4.8" fill="#8080ff"/>
<text x="1604" y="748.6" font-size="13" fill="#a31a1a">3176</text>
<circle cx="1576" cy="762" r="4.8" fill="#ff8080"/>
<circle cx="1591" cy="762" r="4.3" fill="#fff" stroke="#8080ff" stroke-width="1"/>
<text x="1604" y="766.6" font-size="13" fill="#a31a1a">3182</text>
</g></svg>
<div class="a" style="left:1148px;top:27px;width:4px;height:256px;background:#c1c1c1"></div>
<div class="a" style="left:0;top:701px;width:1152px;height:55px;background:#2190c9"></div>
<div class="a" style="left:9px;color:#eef6fb;font-size:13px;height:20px;line-height:20px;top:720px">Revision</div>
<div class="a" style="left:68px;color:#eef6fb;font-size:13px;height:20px;line-height:20px;top:720px">0</div>
<svg class="a" style="left:82px;top:727px" width="10" height="6" viewBox="0 0 10 6"><path d="M0 0H10L5 5.5Z" fill="#eef6fb"/></svg>
<div class="a" style="left:115px;color:#eef6fb;font-size:13px;height:20px;line-height:20px;top:720px">Start</div>
<div class="a" style="left:149.5px;top:719px;width:71px;height:19px;background:#fff;font-size:13px;line-height:19px;padding-left:3px;color:#111">0</div>
<div class="a" style="left:237px;color:#eef6fb;font-size:13px;height:20px;line-height:20px;top:720px">End</div>
<div class="a" style="left:264.5px;top:719px;width:71px;height:19px;background:#fff;font-size:13px;line-height:19px;padding-left:3px;color:#111">-1</div>
<div class="a" style="left:356px;width:67.5px;background:#f44336;color:#fdeceb;top:709px;height:38.5px;line-height:39px;border-radius:2px;font-size:15px;box-shadow:0 2px 3px rgba(0,0,0,.3);text-align:center"><span class="sq">REVERT</span></div>
<div class="a" style="left:432px;width:64px;background:#21ce70;color:#0a2a16;top:709px;height:38.5px;line-height:39px;border-radius:2px;font-size:15px;box-shadow:0 2px 3px rgba(0,0,0,.3);text-align:center"><span class="sq">APPLY</span></div>
<div class="a" style="left:1076px;width:64px;background:#fff;color:#111;top:709px;height:38.5px;line-height:39px;border-radius:2px;font-size:15px;box-shadow:0 2px 3px rgba(0,0,0,.3);text-align:center"><span class="sq">CLOSE</span></div>
<div class="a c" style="left:686px;width:200px;top:712px;height:20px;line-height:20px;font-size:13px;color:#eef6fb">-</div>
<div class="a c" style="left:686px;width:200px;top:729px;height:20px;line-height:20px;font-size:13.8px;color:#eef6fb">Total cuts: 2137</div>
</div>
</body></html>
